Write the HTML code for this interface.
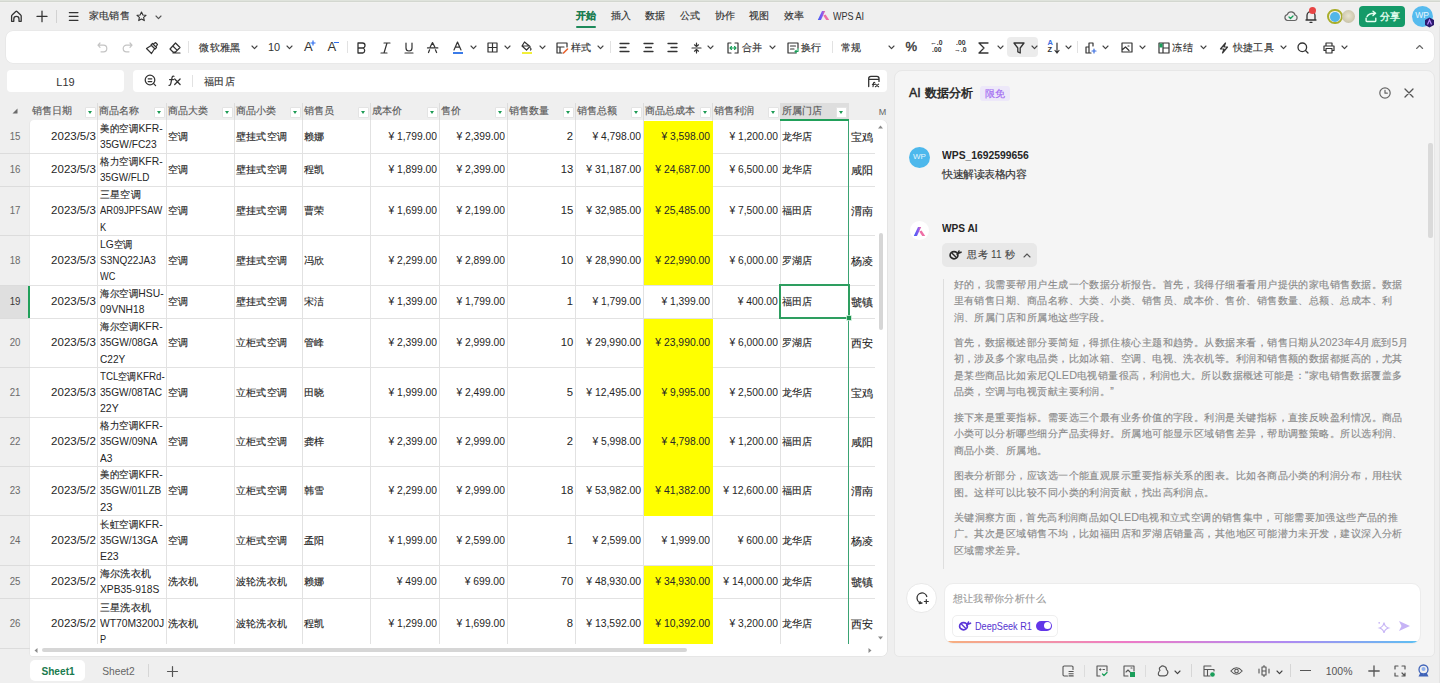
<!DOCTYPE html><html><head><meta charset="utf-8"><style>
*{margin:0;padding:0;box-sizing:border-box}
html,body{width:1440px;height:683px;overflow:hidden;background:#efefef;font-family:"Liberation Sans",sans-serif;color:#262626;position:relative}
.a{position:absolute}
.tl{position:absolute;white-space:nowrap}
.k{font-size:var(--c);letter-spacing:var(--d);-webkit-text-stroke:var(--s,0.15px) currentColor}
svg{position:absolute;overflow:visible}
</style></head><body><div class="a" style="left:0;top:0;width:1440px;height:3px;background:linear-gradient(#dfe3dc 0,#dfe3dc 1px,#d3d7d0 1px,#d3d7d0 2px,#f2f2f0 2px)"></div>
<svg style="left:10px;top:10px;" width="13" height="13" viewBox="0 0 13 13" fill="none" stroke="#333333" stroke-width="1.2" stroke-linecap="round" stroke-linejoin="round"><path d="M1.6 11.3 V5.9 Q1.6 5.3 2.1 4.9 L5.8 1.5 Q6.4 1 7 1.5 L10.7 4.9 Q11.2 5.3 11.2 5.9 V11.3 H9 V8.9 A2.6 2.6 0 0 0 3.8 8.9 V11.3 Z" stroke-width="1.3"/></svg>
<svg style="left:36px;top:10px;" width="12" height="12" viewBox="0 0 12 12" fill="none" stroke="#333333" stroke-width="1.2" stroke-linecap="round" stroke-linejoin="round"><path d="M6 1.1 V11.7 M1 6.4 H11" stroke-width="1.25"/></svg>
<div class="a" style="left:56px;top:10px;width:1px;height:13px;background:#d2d2d2"></div>
<svg style="left:69px;top:12px;" width="10" height="10" viewBox="0 0 10 10" fill="none" stroke="#333333" stroke-width="1.2" stroke-linecap="round" stroke-linejoin="round"><path d="M0.3 0.6 H9 M0.3 4.4 H9 M0.3 8.3 H9" stroke-width="1.15"/></svg>
<div class="tl" style="top:7.30px;line-height:16px;font-size:11.0px;color:#333;left:89.00px;transform-origin:left center;--c:10.2px;--d:0.200px;"><span class="k">家电销售</span></div>
<svg style="left:136px;top:11px;" width="11" height="11" viewBox="0 0 11 11" fill="none" stroke="#333333" stroke-width="1.2" stroke-linecap="round" stroke-linejoin="round"><path d="M5.5 1 L6.9 4 L10 4.3 L7.6 6.4 L8.3 9.6 L5.5 8 L2.7 9.6 L3.4 6.4 L1 4.3 L4.1 4 Z" stroke-width="1.1"/></svg>
<svg style="left:155px;top:15px" width="7" height="4.6" viewBox="-1 -1 7 4.6" fill="none" stroke="#555" stroke-width="1.15" stroke-linecap="round" stroke-linejoin="round"><path d="M0 0 L2.5 2.6 L5 0"/></svg>
<div class="tl" style="top:7.30px;line-height:16px;font-size:11.0px;color:#1c7c52;font-weight:bold;left:576.00px;transform-origin:left center;--c:10.3px;--d:0.300px;"><span class="k">开始</span></div>
<div class="tl" style="top:7.30px;line-height:16px;font-size:11.0px;color:#333;left:610.70px;transform-origin:left center;--c:10.3px;--d:0.300px;"><span class="k">插入</span></div>
<div class="tl" style="top:7.30px;line-height:16px;font-size:11.0px;color:#333;left:645.00px;transform-origin:left center;--c:10.3px;--d:0.300px;"><span class="k">数据</span></div>
<div class="tl" style="top:7.30px;line-height:16px;font-size:11.0px;color:#333;left:680.00px;transform-origin:left center;--c:10.3px;--d:0.300px;"><span class="k">公式</span></div>
<div class="tl" style="top:7.30px;line-height:16px;font-size:11.0px;color:#333;left:714.50px;transform-origin:left center;--c:10.3px;--d:0.300px;"><span class="k">协作</span></div>
<div class="tl" style="top:7.30px;line-height:16px;font-size:11.0px;color:#333;left:749.00px;transform-origin:left center;--c:10.3px;--d:0.300px;"><span class="k">视图</span></div>
<div class="tl" style="top:7.30px;line-height:16px;font-size:11.0px;color:#333;left:783.50px;transform-origin:left center;--c:10.3px;--d:0.300px;"><span class="k">效率</span></div>
<div class="a" style="left:576px;top:25.5px;width:20px;height:2px;background:#1d8a5b;border-radius:1px"></div>
<svg style="left:817px;top:10px" width="13" height="11" viewBox="0 0 13 11"><defs><linearGradient id="wg" x1="0" y1="0" x2="1" y2="0"><stop offset="0" stop-color="#3b5cf5"/><stop offset="0.6" stop-color="#8a5cf0"/><stop offset="1" stop-color="#f06a9a"/></linearGradient></defs><path d="M0.8 10 L5 1 L8.2 1 L4 10 Z" fill="url(#wg)"/><path d="M6.3 5.6 L8.6 4.6 L12.2 10 L9.2 10 Z" fill="#ee6fa6"/></svg>
<div class="tl" style="top:7.60px;line-height:16px;font-size:10.5px;color:#333;left:833.00px;transform-origin:left center;transform:scaleX(0.860);--c:10.2px;--d:0.200px;">WPS AI</div>
<svg style="left:1284px;top:10px;" width="14" height="12" viewBox="0 0 14 12" fill="none" stroke="#333333" stroke-width="1.2" stroke-linecap="round" stroke-linejoin="round"><path d="M3.5 10.5 H10.5 A2.8 2.8 0 0 0 11 5 A4 4 0 0 0 3.3 4.6 A3 3 0 0 0 3.5 10.5 Z" stroke="#666"/><path d="M5 7 L6.5 8.5 L9 6" stroke="#1a9e5a" stroke-width="1.3"/></svg>
<svg style="left:1305px;top:9px;" width="12" height="15" viewBox="0 0 12 15" fill="none" stroke="#333333" stroke-width="1.2" stroke-linecap="round" stroke-linejoin="round"><path d="M2 11 V6.5 A4 4 0 0 1 10 6.5 V11 H11 M1 11 H11 M5 13.3 H7" stroke="#333" stroke-width="1.3"/></svg>
<div class="a" style="left:1309px;top:6.5px;width:7px;height:7px;border-radius:50%;background:#e84545"></div>
<div class="a" style="left:1327px;top:8.8px;width:15.5px;height:15.5px;border-radius:50%;border:2px solid #a9ae2c;background:#efefef"></div>
<div class="a" style="left:1330px;top:11.5px;width:10px;height:10px;border-radius:50%;background:#52b6e8"></div>
<div class="a" style="left:1341.5px;top:9.8px;width:13px;height:13px;border-radius:50%;background:radial-gradient(circle at 50% 45%,#e8e4d0 0,#cfc9b0 60%,#b9b9a6 100%)"></div>
<div class="a" style="left:1359px;top:6px;width:46px;height:21px;border-radius:4px;background:#149a68"></div>
<svg style="left:1364px;top:10px;" width="14" height="13" viewBox="0 0 14 13" fill="none" stroke="#333333" stroke-width="1.2" stroke-linecap="round" stroke-linejoin="round"><path d="M2.1 8.2 V10.8 Q2.1 11.5 2.8 11.5 H11.1 Q11.8 11.5 11.8 10.8 V8.2 M3 6.6 Q4.8 3.2 10.6 3.3 M9 1.2 L11.6 3.3 L9 5.5" stroke="#e6fff1" stroke-width="1.35"/></svg>
<div class="tl" style="top:8.10px;line-height:16px;font-size:11.0px;color:#e6fff1;left:1379.50px;transform-origin:left center;--c:10.3px;--d:0.300px;--s:0.35px;"><span class="k">分享</span></div>
<div class="a" style="left:1411.5px;top:5.5px;width:21px;height:21px;border-radius:50%;background:#56bbee"></div>
<div class="tl" style="top:7.30px;line-height:16px;font-size:8.5px;color:#e9f6fd;left:1415.15px;transform-origin:center center;--c:10.2px;--d:0.200px;">WP</div>
<svg style="left:1424px;top:17px" width="11" height="11" viewBox="0 0 11 11"><path d="M5.5 0.5 L10 3 V8 L5.5 10.5 L1 8 V3 Z" fill="#2c1b6e"/><path d="M3.5 7.5 L5.5 3 L7.5 7.5" stroke="#b98cff" stroke-width="1.2" fill="none"/></svg>
<div class="a" style="left:6px;top:31px;width:1428px;height:32px;background:#fff;border-radius:7px;box-shadow:0 0 0 0.6px #e3e3e3"></div>
<svg style="left:97px;top:42px;" width="11" height="11" viewBox="0 0 11 11" fill="none" stroke="#333333" stroke-width="1.2" stroke-linecap="round" stroke-linejoin="round"><path d="M3 1 L1 3.2 L3 5.4 M1 3.2 H6.5 A3.3 3.3 0 0 1 6.5 9.8 H4" stroke="#c4c4c4"/></svg>
<svg style="left:121.5px;top:42px;" width="11" height="11" viewBox="0 0 11 11" fill="none" stroke="#333333" stroke-width="1.2" stroke-linecap="round" stroke-linejoin="round"><path d="M8 1 L10 3.2 L8 5.4 M10 3.2 H4.5 A3.3 3.3 0 0 0 4.5 9.8 H7" stroke="#c4c4c4"/></svg>
<svg style="left:144.5px;top:41.5px;" width="13" height="13" viewBox="0 0 13 13" fill="none" stroke="#333333" stroke-width="1.2" stroke-linecap="round" stroke-linejoin="round"><path d="M7.5 1.5 L11.5 5.5 L10 7 L6 3 Z M6.2 3.5 L1.5 6.5 L6.5 11.5 L9.5 6.8 M9 1.5 L10.5 0.5 L12.5 2.5 L11.5 4" stroke-width="1.2"/></svg>
<svg style="left:169px;top:42px;" width="12" height="12" viewBox="0 0 12 12" fill="none" stroke="#333333" stroke-width="1.2" stroke-linecap="round" stroke-linejoin="round"><path d="M6.5 1 L11 5.5 L6.5 10 H4 L1 7 Z M3.8 4 L8 8.2 M4 11 H11" stroke-width="1.2"/></svg>
<div class="a" style="left:188px;top:41px;width:1px;height:12px;background:#e2e2e2"></div>
<div class="tl" style="top:39.30px;line-height:16px;font-size:11.0px;color:#333;left:199.20px;transform-origin:left center;--c:10.4px;--d:0.400px;"><span class="k">微软雅黑</span></div>
<svg style="left:250.5px;top:45.2px" width="7" height="4.6" viewBox="-1 -1 7 4.6" fill="none" stroke="#444" stroke-width="1.15" stroke-linecap="round" stroke-linejoin="round"><path d="M0 0 L2.5 2.6 L5 0"/></svg>
<div class="tl" style="top:38.80px;line-height:16px;font-size:11.5px;color:#333;left:268.30px;transform-origin:left center;transform:scaleX(0.950);--c:10.2px;--d:0.200px;">10</div>
<svg style="left:285.5px;top:45.2px" width="7" height="4.6" viewBox="-1 -1 7 4.6" fill="none" stroke="#444" stroke-width="1.15" stroke-linecap="round" stroke-linejoin="round"><path d="M0 0 L2.5 2.6 L5 0"/></svg>
<div class="tl" style="top:38.80px;line-height:16px;font-size:13px;color:#333;left:304.00px;transform-origin:left center;--c:10.2px;--d:0.200px;">A</div>
<svg style="left:310px;top:40px" width="6" height="6"><path d="M3 0.5 V5.5 M0.5 3 H5.5" stroke="#2f6ef0" stroke-width="1.2"/></svg>
<div class="tl" style="top:38.80px;line-height:16px;font-size:13px;color:#333;left:327.50px;transform-origin:left center;--c:10.2px;--d:0.200px;">A</div>
<div class="a" style="left:334px;top:42px;width:5px;height:1.2px;background:#2f6ef0"></div>
<div class="a" style="left:346.5px;top:41px;width:1px;height:12px;background:#e2e2e2"></div>
<svg style="left:355.5px;top:41.5px;" width="11" height="12" viewBox="0 0 11 12" fill="none" stroke="#333333" stroke-width="1.2" stroke-linecap="round" stroke-linejoin="round"><path d="M2 1 H6.5 A2.5 2.5 0 0 1 6.5 6 H2 Z M2 6 H7 A2.7 2.7 0 0 1 7 11 H2 Z" stroke-width="1.3"/></svg>
<svg style="left:379.5px;top:41.5px;" width="11" height="12" viewBox="0 0 11 12" fill="none" stroke="#333333" stroke-width="1.2" stroke-linecap="round" stroke-linejoin="round"><path d="M4 1 H10 M1 11 H7 M7 1 L4 11" stroke-width="1.2"/></svg>
<svg style="left:403.5px;top:41.5px;" width="10" height="12" viewBox="0 0 10 12" fill="none" stroke="#333333" stroke-width="1.2" stroke-linecap="round" stroke-linejoin="round"><path d="M2 1 V6 A3 3 0 0 0 8 6 V1 M1 11 H9" stroke-width="1.2"/></svg>
<svg style="left:427px;top:41.5px;" width="12" height="12" viewBox="0 0 12 12" fill="none" stroke="#333333" stroke-width="1.2" stroke-linecap="round" stroke-linejoin="round"><path d="M3.3 4.7 L5.5 0.6 L7.7 4.7 M0.5 5.9 H10.8 M2.6 7.8 L1.5 10.5 M8.4 7.8 L9.6 10.5" stroke-width="1.25"/></svg>
<svg style="left:452px;top:41px;" width="11" height="12" viewBox="0 0 11 12" fill="none" stroke="#333333" stroke-width="1.2" stroke-linecap="round" stroke-linejoin="round"><path d="M2 9 L5.5 1 L9 9 M3.3 6.2 H7.7" stroke-width="1.2"/></svg>
<div class="a" style="left:453px;top:52px;width:10px;height:2px;background:#3b7be8"></div>
<svg style="left:470px;top:45.2px" width="7" height="4.6" viewBox="-1 -1 7 4.6" fill="none" stroke="#444" stroke-width="1.15" stroke-linecap="round" stroke-linejoin="round"><path d="M0 0 L2.5 2.6 L5 0"/></svg>
<svg style="left:486.5px;top:42px;" width="11" height="11" viewBox="0 0 11 11" fill="none" stroke="#333333" stroke-width="1.2" stroke-linecap="round" stroke-linejoin="round"><path d="M1 1 H10 V10 H1 Z M5.5 1 V10 M1 5.5 H10" stroke-width="1.2"/></svg>
<svg style="left:504px;top:45.2px" width="7" height="4.6" viewBox="-1 -1 7 4.6" fill="none" stroke="#444" stroke-width="1.15" stroke-linecap="round" stroke-linejoin="round"><path d="M0 0 L2.5 2.6 L5 0"/></svg>
<svg style="left:521px;top:41px;" width="11" height="11" viewBox="0 0 11 11" fill="none" stroke="#333333" stroke-width="1.2" stroke-linecap="round" stroke-linejoin="round"><path d="M3.5 1 L9 5.5 L5.5 9 L1 5 Z M1.5 5 H8.7 M9.5 7 Q10.5 8.5 9.5 9" stroke-width="1.2"/></svg>
<div class="a" style="left:521.5px;top:52px;width:10px;height:2px;background:#f2ef3a"></div>
<svg style="left:539px;top:45.2px" width="7" height="4.6" viewBox="-1 -1 7 4.6" fill="none" stroke="#444" stroke-width="1.15" stroke-linecap="round" stroke-linejoin="round"><path d="M0 0 L2.5 2.6 L5 0"/></svg>
<svg style="left:555.5px;top:41.5px;" width="13" height="12" viewBox="0 0 13 12" fill="none" stroke="#333333" stroke-width="1.2" stroke-linecap="round" stroke-linejoin="round"><path d="M1 1 H11 V5 M1 1 V11 H6 M1 5 H8 M4 5 V11" stroke-width="1.2"/><path d="M7.5 11 L11.5 7" stroke="#e8612c" stroke-width="1.6"/></svg>
<div class="tl" style="top:39.30px;line-height:16px;font-size:11.0px;color:#333;left:570.80px;transform-origin:left center;--c:10.4px;--d:0.400px;"><span class="k">样式</span></div>
<svg style="left:596.5px;top:45.2px" width="7" height="4.6" viewBox="-1 -1 7 4.6" fill="none" stroke="#444" stroke-width="1.15" stroke-linecap="round" stroke-linejoin="round"><path d="M0 0 L2.5 2.6 L5 0"/></svg>
<div class="a" style="left:610px;top:41px;width:1px;height:12px;background:#e2e2e2"></div>
<svg style="left:618.5px;top:42px;" width="11" height="11" viewBox="0 0 11 11" fill="none" stroke="#333333" stroke-width="1.2" stroke-linecap="round" stroke-linejoin="round"><path d="M1 1.5 H10 M1 5.5 H7 M1 9.5 H10" stroke-width="1.3"/></svg>
<svg style="left:643px;top:42px;" width="11" height="11" viewBox="0 0 11 11" fill="none" stroke="#333333" stroke-width="1.2" stroke-linecap="round" stroke-linejoin="round"><path d="M1 1.5 H10 M2.5 5.5 H8.5 M1 9.5 H10" stroke-width="1.3"/></svg>
<svg style="left:666.5px;top:42px;" width="11" height="11" viewBox="0 0 11 11" fill="none" stroke="#333333" stroke-width="1.2" stroke-linecap="round" stroke-linejoin="round"><path d="M1 1.5 H10 M4 5.5 H10 M1 9.5 H10" stroke-width="1.3"/></svg>
<svg style="left:690.5px;top:41.5px;" width="11" height="12" viewBox="0 0 11 12" fill="none" stroke="#333333" stroke-width="1.2" stroke-linecap="round" stroke-linejoin="round"><path d="M1 6 H10 M5.5 1 V4.5 M3.5 2.8 L5.5 4.5 L7.5 2.8 M5.5 11 V7.5 M3.5 9.2 L5.5 7.5 L7.5 9.2" stroke-width="1.2"/></svg>
<svg style="left:706.5px;top:45.2px" width="7" height="4.6" viewBox="-1 -1 7 4.6" fill="none" stroke="#444" stroke-width="1.15" stroke-linecap="round" stroke-linejoin="round"><path d="M0 0 L2.5 2.6 L5 0"/></svg>
<svg style="left:727px;top:41.5px;" width="12" height="12" viewBox="0 0 12 12" fill="none" stroke="#333333" stroke-width="1.2" stroke-linecap="round" stroke-linejoin="round"><path d="M4 1 H1 V11 H4 M8 1 H11 V11 H8" stroke-width="1.2"/><path d="M3 6 H9 M4.5 4.5 L3 6 L4.5 7.5 M7.5 4.5 L9 6 L7.5 7.5" stroke="#1a9e5a" stroke-width="1.1"/></svg>
<div class="tl" style="top:39.30px;line-height:16px;font-size:11.0px;color:#333;left:741.70px;transform-origin:left center;--c:10.4px;--d:0.400px;"><span class="k">合并</span></div>
<svg style="left:769px;top:45.2px" width="7" height="4.6" viewBox="-1 -1 7 4.6" fill="none" stroke="#444" stroke-width="1.15" stroke-linecap="round" stroke-linejoin="round"><path d="M0 0 L2.5 2.6 L5 0"/></svg>
<svg style="left:786.5px;top:41.5px;" width="12" height="12" viewBox="0 0 12 12" fill="none" stroke="#333333" stroke-width="1.2" stroke-linecap="round" stroke-linejoin="round"><path d="M9 11 H1 V1 H11 V6 M3.5 4 H8.5 M3.5 7 H7" stroke-width="1.2"/><path d="M11 6.5 V9.5 H8 M9.3 8.3 L8 9.5 L9.3 10.7" stroke="#1a9e5a" stroke-width="1.1"/></svg>
<div class="tl" style="top:39.30px;line-height:16px;font-size:11.0px;color:#333;left:800.80px;transform-origin:left center;--c:10.4px;--d:0.400px;"><span class="k">换行</span></div>
<div class="a" style="left:831.5px;top:41px;width:1px;height:12px;background:#e2e2e2"></div>
<div class="tl" style="top:39.30px;line-height:16px;font-size:11.0px;color:#333;left:840.80px;transform-origin:left center;--c:10.4px;--d:0.400px;"><span class="k">常规</span></div>
<svg style="left:887.5px;top:45.2px" width="7" height="4.6" viewBox="-1 -1 7 4.6" fill="none" stroke="#444" stroke-width="1.15" stroke-linecap="round" stroke-linejoin="round"><path d="M0 0 L2.5 2.6 L5 0"/></svg>
<div class="tl" style="top:38.80px;line-height:16px;font-size:13px;color:#333;left:905.50px;transform-origin:left center;--c:10.2px;--d:0.200px;-webkit-text-stroke:0.4px #333;">%</div>
<div class="tl" style="top:35.30px;line-height:16px;font-size:7.5px;color:#333;font-weight:bold;left:929.50px;transform-origin:left center;transform:scaleX(0.900);--c:10.2px;--d:0.200px;">←.0</div>
<div class="tl" style="top:42.30px;line-height:16px;font-size:7.5px;color:#333;font-weight:bold;left:931.50px;transform-origin:left center;transform:scaleX(0.900);--c:10.2px;--d:0.200px;">.00</div>
<div class="tl" style="top:35.30px;line-height:16px;font-size:7.5px;color:#333;font-weight:bold;left:955.50px;transform-origin:left center;transform:scaleX(0.900);--c:10.2px;--d:0.200px;">.00</div>
<div class="tl" style="top:42.30px;line-height:16px;font-size:7.5px;color:#333;font-weight:bold;left:953.50px;transform-origin:left center;transform:scaleX(0.900);--c:10.2px;--d:0.200px;">→.0</div>
<svg style="left:978px;top:41.5px;" width="11" height="12" viewBox="0 0 11 12" fill="none" stroke="#333333" stroke-width="1.2" stroke-linecap="round" stroke-linejoin="round"><path d="M10 1 H1 L6 6 L1 11 H10" stroke-width="1.3"/></svg>
<svg style="left:996.5px;top:45.2px" width="7" height="4.6" viewBox="-1 -1 7 4.6" fill="none" stroke="#444" stroke-width="1.15" stroke-linecap="round" stroke-linejoin="round"><path d="M0 0 L2.5 2.6 L5 0"/></svg>
<div class="a" style="left:1007px;top:37px;width:31px;height:20px;background:#ececec;border-radius:4px"></div>
<svg style="left:1012.5px;top:41.5px;" width="12" height="12" viewBox="0 0 12 12" fill="none" stroke="#333333" stroke-width="1.2" stroke-linecap="round" stroke-linejoin="round"><path d="M1 1 H11 L7.2 6 V11 L4.8 9.8 V6 Z" stroke-width="1.3"/></svg>
<svg style="left:1030.5px;top:45.2px" width="7" height="4.6" viewBox="-1 -1 7 4.6" fill="none" stroke="#444" stroke-width="1.15" stroke-linecap="round" stroke-linejoin="round"><path d="M0 0 L2.5 2.6 L5 0"/></svg>
<div class="tl" style="top:35.30px;line-height:16px;font-size:7.5px;color:#3b6fe0;font-weight:bold;left:1047.50px;transform-origin:left center;--c:10.2px;--d:0.200px;">A</div>
<div class="tl" style="top:42.30px;line-height:16px;font-size:7.5px;color:#333;font-weight:bold;left:1047.50px;transform-origin:left center;--c:10.2px;--d:0.200px;">Z</div>
<svg style="left:1054px;top:41.5px;" width="6" height="12" viewBox="0 0 6 12" fill="none" stroke="#333333" stroke-width="1.2" stroke-linecap="round" stroke-linejoin="round"><path d="M3 1 V11 M1 8.5 L3 11 L5 8.5" stroke-width="1.2"/></svg>
<svg style="left:1065px;top:45.2px" width="7" height="4.6" viewBox="-1 -1 7 4.6" fill="none" stroke="#444" stroke-width="1.15" stroke-linecap="round" stroke-linejoin="round"><path d="M0 0 L2.5 2.6 L5 0"/></svg>
<div class="a" style="left:1076.5px;top:41px;width:1px;height:12px;background:#e2e2e2"></div>
<svg style="left:1084.5px;top:41.5px;" width="12" height="12" viewBox="0 0 12 12" fill="none" stroke="#333333" stroke-width="1.2" stroke-linecap="round" stroke-linejoin="round"><path d="M1 11 V5 H4 V1 H8 V4 M4 11 V5 M1 11 H6" stroke-width="1.2"/><path d="M9 7 V11 M7 9 H11" stroke="#3b6fe0" stroke-width="1.2"/></svg>
<svg style="left:1101.5px;top:45.2px" width="7" height="4.6" viewBox="-1 -1 7 4.6" fill="none" stroke="#444" stroke-width="1.15" stroke-linecap="round" stroke-linejoin="round"><path d="M0 0 L2.5 2.6 L5 0"/></svg>
<svg style="left:1120.5px;top:42px;" width="12" height="11" viewBox="0 0 12 11" fill="none" stroke="#333333" stroke-width="1.2" stroke-linecap="round" stroke-linejoin="round"><path d="M1 1 H11 V10 H1 Z M1 8 L4.5 5 L8 8.5 M7 4 H8" stroke-width="1.2"/></svg>
<svg style="left:1138.5px;top:45.2px" width="7" height="4.6" viewBox="-1 -1 7 4.6" fill="none" stroke="#444" stroke-width="1.15" stroke-linecap="round" stroke-linejoin="round"><path d="M0 0 L2.5 2.6 L5 0"/></svg>
<svg style="left:1157.5px;top:41.5px;" width="12" height="12" viewBox="0 0 12 12" fill="none" stroke="#333333" stroke-width="1.2" stroke-linecap="round" stroke-linejoin="round"><path d="M1 1 H11 V11 H1 Z M5 1 V11 M5 6 H11" stroke-width="1.2"/><path d="M1.5 1.5 H4.5 V5.5 H1.5 Z" fill="#1a9e5a" stroke="none"/></svg>
<div class="tl" style="top:39.30px;line-height:16px;font-size:11.0px;color:#333;left:1172.30px;transform-origin:left center;--c:10.4px;--d:0.400px;"><span class="k">冻结</span></div>
<svg style="left:1199.5px;top:45.2px" width="7" height="4.6" viewBox="-1 -1 7 4.6" fill="none" stroke="#444" stroke-width="1.15" stroke-linecap="round" stroke-linejoin="round"><path d="M0 0 L2.5 2.6 L5 0"/></svg>
<svg style="left:1218.5px;top:41.5px;" width="10" height="12" viewBox="0 0 10 12" fill="none" stroke="#333333" stroke-width="1.2" stroke-linecap="round" stroke-linejoin="round"><path d="M6.5 1 L1.5 7 H5 L3.5 11 L8.5 5 H5 Z" stroke-width="1.2"/></svg>
<div class="tl" style="top:39.30px;line-height:16px;font-size:11.0px;color:#333;left:1232.70px;transform-origin:left center;--c:10.4px;--d:0.400px;"><span class="k">快捷工具</span></div>
<svg style="left:1279.5px;top:45.2px" width="7" height="4.6" viewBox="-1 -1 7 4.6" fill="none" stroke="#444" stroke-width="1.15" stroke-linecap="round" stroke-linejoin="round"><path d="M0 0 L2.5 2.6 L5 0"/></svg>
<svg style="left:1297px;top:41.5px;" width="12" height="12" viewBox="0 0 12 12" fill="none" stroke="#333333" stroke-width="1.2" stroke-linecap="round" stroke-linejoin="round"><circle cx="5.3" cy="5.3" r="4.3" stroke-width="1.3"/><path d="M8.5 8.5 L11 11" stroke-width="1.3"/></svg>
<svg style="left:1322.5px;top:41.5px;" width="12" height="12" viewBox="0 0 12 12" fill="none" stroke="#333333" stroke-width="1.2" stroke-linecap="round" stroke-linejoin="round"><path d="M3 4 V1 H9 V4 M3 8.5 H1 V4 H11 V8.5 H9 M3 6.5 H9 V11 H3 Z" stroke-width="1.2"/></svg>
<svg style="left:1341px;top:45.2px" width="7" height="4.6" viewBox="-1 -1 7 4.6" fill="none" stroke="#444" stroke-width="1.15" stroke-linecap="round" stroke-linejoin="round"><path d="M0 0 L2.5 2.6 L5 0"/></svg>
<svg style="left:1414.5px;top:44px" width="10" height="6" viewBox="0 0 10 6" fill="none" stroke="#6a6a6a" stroke-width="1.15" stroke-linecap="round" stroke-linejoin="round"><path d="M1.6 4.5 L4.6 1.5 L7.6 4.5"/></svg>
<div class="a" style="left:7px;top:70px;width:117px;height:22px;background:#fff;border-radius:4px"></div>
<div class="tl" style="top:74.30px;line-height:16px;font-size:11px;color:#333;left:56.32px;transform-origin:center center;--c:10.2px;--d:0.200px;">L19</div>
<div class="a" style="left:133px;top:70px;width:754px;height:22px;background:#fff;border-radius:4px"></div>
<svg style="left:143px;top:73px;" width="16" height="16" viewBox="0 0 16 16" fill="none" stroke="#333333" stroke-width="1.2" stroke-linecap="round" stroke-linejoin="round"><circle cx="7" cy="7" r="4.8" stroke-width="1.25"/><path d="M10.4 10.4 L12.6 12.6 M5.2 5.75 H8.8 M5.2 8.5 H8.8" stroke-width="1.25"/></svg>
<svg style="left:167px;top:73px;" width="16" height="16" viewBox="0 0 16 16" fill="none" stroke="#333333" stroke-width="1.2" stroke-linecap="round" stroke-linejoin="round"><path d="M6.9 3.3 Q5.6 2.5 5.1 4.4 L3.8 10.6 Q3.3 12.6 2 12.3 M2.6 6.6 H6.5 M7.7 6 L13.1 11.5 M13.1 6 L7.7 11.5" stroke-width="1.25"/></svg>
<div class="a" style="left:192px;top:75px;width:1px;height:12px;background:#e2e2e2"></div>
<div class="tl" style="top:73.30px;line-height:16px;font-size:11.0px;color:#333;left:204.00px;transform-origin:left center;--c:10.3px;--d:0.300px;"><span class="k">福田店</span></div>
<svg style="left:866px;top:74px;" width="16" height="16" viewBox="0 0 16 16" fill="none" stroke="#333333" stroke-width="1.2" stroke-linecap="round" stroke-linejoin="round"><path d="M2.7 12.6 V4.5 Q2.7 2.3 4.9 2.3 H10.9 Q13 2.3 13 4.5 V7.4 M2.7 5.4 H13" stroke-width="1.3"/><path d="M8.7 8.5 Q7.7 8.2 7.5 9.4 L7 12.7 M6.4 10.3 H8.5 M9.4 10.1 L12.6 12.7 M12.6 10.1 L9.4 12.7" stroke-width="1.15"/></svg>
<div class="a" style="left:29.5px;top:659.7px;width:55.5px;height:21.6px;background:#fff;border-radius:5px"></div>
<div class="tl" style="top:663.30px;line-height:16px;font-size:11px;color:#1a7a4e;font-weight:bold;left:39.76px;transform-origin:center center;transform:scaleX(0.920);--c:10.2px;--d:0.200px;">Sheet1</div>
<div class="tl" style="top:663.30px;line-height:16px;font-size:11px;color:#666;left:101.17px;transform-origin:center center;transform:scaleX(0.930);--c:10.2px;--d:0.200px;">Sheet2</div>
<div class="a" style="left:148px;top:664px;width:1px;height:13px;background:#d6d6d6"></div>
<svg style="left:166.5px;top:665.5px;" width="11" height="11" viewBox="0 0 11 11" fill="none" stroke="#333333" stroke-width="1.2" stroke-linecap="round" stroke-linejoin="round"><path d="M5.5 0.5 V10.5 M0.5 5.5 H10.5" stroke="#555" stroke-width="1.2"/></svg>
<svg style="left:1062px;top:665px;" width="12" height="12" viewBox="0 0 12 12" fill="none" stroke="#333333" stroke-width="1.2" stroke-linecap="round" stroke-linejoin="round"><path d="M11 4.5 V2.2 Q11 1 9.8 1 H2.2 Q1 1 1 2.2 V9.8 Q1 11 2.2 11 H5.5 M7 6.5 H11.2 M7 8.7 H11.2 M7 10.9 H11.2" stroke="#555" stroke-width="1.1"/></svg>
<div class="a" style="left:1084px;top:665px;width:1px;height:12px;background:#dcdcdc"></div>
<svg style="left:1096px;top:665px;" width="12" height="12" viewBox="0 0 12 12" fill="none" stroke="#333333" stroke-width="1.2" stroke-linecap="round" stroke-linejoin="round"><path d="M4 11 H1 V1 H11 V6 M3.5 4.5 H5 M7 4.5 H8.5 M4.3 3.8 V5.2" stroke="#555" stroke-width="1.1"/><path d="M6.5 9 L8 10.5 L11 7.5" stroke="#1a9e5a" stroke-width="1.3"/></svg>
<svg style="left:1123px;top:665px;" width="12" height="12" viewBox="0 0 12 12" fill="none" stroke="#333333" stroke-width="1.2" stroke-linecap="round" stroke-linejoin="round"><path d="M5 11 H1 V1 H11 V6 M3 7 L5 5 L7 7 M8 3 H9" stroke="#555" stroke-width="1.1"/><rect x="7" y="7" width="5" height="5" fill="#1a9e5a" stroke="none"/></svg>
<div class="a" style="left:1145px;top:665px;width:1px;height:12px;background:#dcdcdc"></div>
<svg style="left:1156.5px;top:665px;" width="12" height="12" viewBox="0 0 12 12" fill="none" stroke="#333333" stroke-width="1.2" stroke-linecap="round" stroke-linejoin="round"><path d="M3 5.3 Q1.4 3.2 3.6 1.9 Q5.4 0.1 7.4 1.5 Q9.6 2.2 9.4 4.6 Q11.6 6.2 10.6 8.6 Q9.9 10.9 7.4 10.8 H3.6 Q0.9 10.8 1.4 8.1 Q1.8 6.4 3 5.3 Z" stroke="#555" stroke-width="1.15"/></svg>
<svg style="left:1174px;top:669.5px" width="7" height="4.6" viewBox="-1 -1 7 4.6" fill="none" stroke="#444" stroke-width="1.15" stroke-linecap="round" stroke-linejoin="round"><path d="M0 0 L2.5 2.6 L5 0"/></svg>
<div class="a" style="left:1191px;top:664px;width:1px;height:13px;background:#d6d6d6"></div>
<svg style="left:1203px;top:665px;" width="12" height="12" viewBox="0 0 12 12" fill="none" stroke="#333333" stroke-width="1.2" stroke-linecap="round" stroke-linejoin="round"><path d="M8 1 H1 V11 H7 M1 4.5 H11 V6 M4.5 4.5 V11" stroke="#555" stroke-width="1.1"/><circle cx="9.5" cy="9.5" r="2.3" fill="#1a9e5a" stroke="none"/></svg>
<svg style="left:1229.5px;top:666px;" width="13" height="10" viewBox="0 0 13 10" fill="none" stroke="#333333" stroke-width="1.2" stroke-linecap="round" stroke-linejoin="round"><path d="M0.8 5 Q6.5 -1.5 12.2 5 Q6.5 11.5 0.8 5 Z" stroke="#555" stroke-width="1.1"/><circle cx="6.5" cy="5" r="1.8" stroke="#555" stroke-width="1.1"/></svg>
<svg style="left:1257.5px;top:665px;" width="12" height="12" viewBox="0 0 12 12" fill="none" stroke="#333333" stroke-width="1.2" stroke-linecap="round" stroke-linejoin="round"><path d="M4 2 H8 V10 H4 Z M6 0.5 V2 M6 10 V11.5 M1 4 V8 M11 4 V8 M4 6 H8" stroke="#555" stroke-width="1.1"/></svg>
<svg style="left:1276px;top:669.5px" width="7" height="4.6" viewBox="-1 -1 7 4.6" fill="none" stroke="#444" stroke-width="1.15" stroke-linecap="round" stroke-linejoin="round"><path d="M0 0 L2.5 2.6 L5 0"/></svg>
<div class="a" style="left:1289.5px;top:664px;width:1px;height:13px;background:#d6d6d6"></div>
<div class="a" style="left:1300px;top:670px;width:11px;height:1.3px;background:#555"></div>
<div class="tl" style="top:663.30px;line-height:16px;font-size:11px;color:#555;left:1325.43px;transform-origin:center center;transform:scaleX(0.950);--c:10.2px;--d:0.200px;">100%</div>
<svg style="left:1367.5px;top:665px;" width="12" height="12" viewBox="0 0 12 12" fill="none" stroke="#333333" stroke-width="1.2" stroke-linecap="round" stroke-linejoin="round"><path d="M6 0.8 V11.2 M0.8 6 H11.2" stroke="#555" stroke-width="1.3"/></svg>
<svg style="left:1394px;top:665px;" width="12" height="12" viewBox="0 0 12 12" fill="none" stroke="#333333" stroke-width="1.2" stroke-linecap="round" stroke-linejoin="round"><path d="M1 4 V1 H4 M8 1 H11 V4 M11 8 V11 H8 M4 11 H1 V8 M8 8 L10.5 10.5" stroke="#555" stroke-width="1.2"/></svg>
<svg style="left:1417px;top:664px" width="13" height="13" viewBox="0 0 13 13"><circle cx="6.5" cy="5.5" r="4.5" fill="none" stroke="#3f63b8" stroke-width="1.3"/><path d="M1.5 12.5 L3.5 8.5 L6.5 10.5 L9.5 8.5 L11.5 12.5 Z" fill="#3f63b8"/><circle cx="6.5" cy="5" r="2" fill="#8fb0ee"/></svg>
<div class="a" style="left:894px;top:70px;width:540.5px;height:586.5px;background:#f5f5f5;border-radius:8px 8px 5px 5px;border:1px solid #e7e7e7"></div>
<div class="a" style="left:1439px;top:26px;width:1px;height:657px;background:#e4e4e4"></div>
<div class="tl" style="top:84.80px;line-height:16px;font-size:13px;color:#262626;left:909.00px;transform-origin:left center;transform:scaleX(0.950);--c:10.2px;--d:0.200px;-webkit-text-stroke:0.45px #262626;">AI </div>
<div class="tl" style="top:84.80px;line-height:16px;font-size:11.0px;color:#262626;left:924.50px;transform-origin:left center;--c:12.2px;--d:0.200px;--s:0.5px;"><span class="k">数据分析</span></div>
<div class="a" style="left:980px;top:86px;width:30px;height:15px;background:#ede8f9;border-radius:3px"></div>
<div class="tl" style="top:84.80px;line-height:16px;font-size:11.0px;color:#a36bf2;left:985.00px;transform-origin:left center;--c:10px;--d:0.000px;"><span class="k">限免</span></div>
<svg style="left:1378.5px;top:87px;" width="12" height="12" viewBox="0 0 12 12" fill="none" stroke="#333333" stroke-width="1.2" stroke-linecap="round" stroke-linejoin="round"><circle cx="6" cy="6" r="5.2" stroke="#666" stroke-width="1.2"/><path d="M6 3.3 V6.2 H8.3" stroke="#666" stroke-width="1.2"/></svg>
<svg style="left:1403.5px;top:88px;" width="10" height="10" viewBox="0 0 10 10" fill="none" stroke="#333333" stroke-width="1.2" stroke-linecap="round" stroke-linejoin="round"><path d="M1 1 L9 9 M9 1 L1 9" stroke="#555" stroke-width="1.3"/></svg>
<div class="a" style="left:1428px;top:142.5px;width:4.5px;height:95px;background:#dadada;border-radius:2px"></div>
<div class="a" style="left:909px;top:146.7px;width:21px;height:21px;border-radius:50%;background:#4db8ec"></div>
<div class="tl" style="top:148.50px;line-height:16px;font-size:8px;color:#e6f5fd;left:913.06px;transform-origin:center center;--c:10.2px;--d:0.200px;">WP</div>
<div class="tl" style="top:146.70px;line-height:16px;font-size:11px;color:#262626;font-weight:bold;left:942.20px;transform-origin:left center;transform:scaleX(0.940);--c:10.2px;--d:0.200px;">WPS_1692599656</div>
<div class="tl" style="top:165.90px;line-height:16px;font-size:11.0px;color:#333;left:942.20px;transform-origin:left center;--c:10.55px;--d:-0.450px;"><span class="k">快速解读表格内容</span></div>
<div class="a" style="left:909.9px;top:221.3px;width:19px;height:19px;border-radius:50%;background:#fff"></div>
<svg style="left:913px;top:225.5px" width="13" height="11" viewBox="0 0 13 11"><defs><linearGradient id="wg2" x1="0" y1="0" x2="1" y2="0"><stop offset="0" stop-color="#3b5cf5"/><stop offset="0.6" stop-color="#8a5cf0"/><stop offset="1" stop-color="#f06a9a"/></linearGradient></defs><path d="M0.8 10 L5 1 L8.2 1 L4 10 Z" fill="url(#wg2)"/><path d="M6.3 5.6 L8.6 4.6 L12.2 10 L9.2 10 Z" fill="#ee6fa6"/></svg>
<div class="tl" style="top:219.90px;line-height:16px;font-size:11px;color:#262626;font-weight:bold;left:942.20px;transform-origin:left center;transform:scaleX(0.920);--c:10.2px;--d:0.200px;">WPS AI</div>
<div class="a" style="left:942px;top:243px;width:95px;height:24px;background:#e8e8e8;border-radius:5px"></div>
<svg style="left:948.5px;top:249px" width="12" height="12" viewBox="0 0 12 12"><ellipse cx="5" cy="6.2" rx="3.9" ry="3.6" stroke="#2a2a2a" stroke-width="1.7" fill="none"/><path d="M2.6 3.8 L7.8 9" stroke="#2a2a2a" stroke-width="1.4" fill="none"/><path d="M8.2 5.6 L10 2 M8.8 4.4 L12 3.2" stroke="#2a2a2a" stroke-width="1.6" fill="none" stroke-linecap="round"/></svg>
<div class="tl" style="top:246.40px;line-height:16px;font-size:11.0px;color:#444;left:967.40px;transform-origin:left center;--c:10.3px;--d:0.300px;"><span class="k">思考</span></div>
<div class="tl" style="top:246.40px;line-height:16px;font-size:11px;color:#444;left:990.50px;transform-origin:left center;transform:scaleX(0.920);--c:10.2px;--d:0.200px;">11</div>
<div class="tl" style="top:246.40px;line-height:16px;font-size:11.0px;color:#444;left:1005.30px;transform-origin:left center;--c:10.3px;--d:0.300px;"><span class="k">秒</span></div>
<svg style="left:1022.5px;top:252.5px" width="8" height="5" viewBox="0 0 8 5" fill="none" stroke="#555" stroke-width="1.1" stroke-linecap="round" stroke-linejoin="round"><path d="M1 4 L4 1 L7 4"/></svg>
<svg style="left:1022px;top:252px" width="8" height="5"></svg>
<div class="a" style="left:942.5px;top:279px;width:1px;height:290px;background:#dedede"></div>
<div class="tl" style="top:275.60px;line-height:16px;font-size:11px;color:#8a8a8a;left:953.60px;transform-origin:left center;--c:10.45px;--d:0.450px;"><span class="k">好的，我需要帮用户生成一个数据分析报告。首先，我得仔细看看用户提供的家电销售数据。数据</span></div>
<div class="tl" style="top:292.10px;line-height:16px;font-size:11px;color:#8a8a8a;left:953.60px;transform-origin:left center;--c:10.45px;--d:0.450px;"><span class="k">里有销售日期、商品名称、大类、小类、销售员、成本价、售价、销售数量、总额、总成本、利</span></div>
<div class="tl" style="top:308.60px;line-height:16px;font-size:11px;color:#8a8a8a;left:953.60px;transform-origin:left center;--c:10.45px;--d:0.450px;"><span class="k">润、所属门店和所属地这些字段。</span></div>
<div class="tl" style="top:333.90px;line-height:16px;font-size:11px;color:#8a8a8a;left:953.60px;transform-origin:left center;--c:10.45px;--d:0.450px;"><span class="k">首先，数据概述部分要简短，得抓住核心主题和趋势。从数据来看，销售日期从</span>2023<span class="k">年</span>4<span class="k">月底到</span>5<span class="k">月</span></div>
<div class="tl" style="top:350.40px;line-height:16px;font-size:11px;color:#8a8a8a;left:953.60px;transform-origin:left center;--c:10.45px;--d:0.450px;"><span class="k">初，涉及多个家电品类，比如冰箱、空调、电视、洗衣机等。利润和销售额的数据都挺高的，尤其</span></div>
<div class="tl" style="top:366.90px;line-height:16px;font-size:11px;color:#8a8a8a;left:953.60px;transform-origin:left center;transform:scaleX(0.992);--c:10.45px;--d:0.450px;"><span class="k">是某些商品比如索尼</span>QLED<span class="k">电视销量很高，利润也大。所以数据概述可能是：“家电销售数据覆盖多</span></div>
<div class="tl" style="top:383.40px;line-height:16px;font-size:11px;color:#8a8a8a;left:953.60px;transform-origin:left center;--c:10.45px;--d:0.450px;"><span class="k">品类，空调与电视贡献主要利润。”</span></div>
<div class="tl" style="top:408.70px;line-height:16px;font-size:11px;color:#8a8a8a;left:953.60px;transform-origin:left center;--c:10.45px;--d:0.450px;"><span class="k">接下来是重要指标。需要选三个最有业务价值的字段。利润是关键指标，直接反映盈利情况。商品</span></div>
<div class="tl" style="top:425.20px;line-height:16px;font-size:11px;color:#8a8a8a;left:953.60px;transform-origin:left center;--c:10.45px;--d:0.450px;"><span class="k">小类可以分析哪些细分产品卖得好。所属地可能显示区域销售差异，帮助调整策略。所以选利润、</span></div>
<div class="tl" style="top:441.70px;line-height:16px;font-size:11px;color:#8a8a8a;left:953.60px;transform-origin:left center;--c:10.45px;--d:0.450px;"><span class="k">商品小类、所属地。</span></div>
<div class="tl" style="top:467.00px;line-height:16px;font-size:11px;color:#8a8a8a;left:953.60px;transform-origin:left center;--c:10.45px;--d:0.450px;"><span class="k">图表分析部分，应该选一个能直观展示重要指标关系的图表。比如各商品小类的利润分布，用柱状</span></div>
<div class="tl" style="top:483.50px;line-height:16px;font-size:11px;color:#8a8a8a;left:953.60px;transform-origin:left center;--c:10.45px;--d:0.450px;"><span class="k">图。这样可以比较不同小类的利润贡献，找出高利润点。</span></div>
<div class="tl" style="top:508.80px;line-height:16px;font-size:11px;color:#8a8a8a;left:953.60px;transform-origin:left center;transform:scaleX(0.991);--c:10.45px;--d:0.450px;"><span class="k">关键洞察方面，首先高利润商品如</span>QLED<span class="k">电视和立式空调的销售集中，可能需要加强这些产品的推</span></div>
<div class="tl" style="top:525.30px;line-height:16px;font-size:11px;color:#8a8a8a;left:953.60px;transform-origin:left center;--c:10.45px;--d:0.450px;"><span class="k">广。其次是区域销售不均，比如福田店和罗湖店销量高，其他地区可能潜力未开发，建议深入分析</span></div>
<div class="tl" style="top:541.80px;line-height:16px;font-size:11px;color:#8a8a8a;left:953.60px;transform-origin:left center;--c:10.45px;--d:0.450px;"><span class="k">区域需求差异。</span></div>
<div class="a" style="left:906.3px;top:582.5px;width:30.6px;height:30.6px;border-radius:50%;background:#fff;border:1px solid #e9e9e9"></div>
<svg style="left:915.5px;top:591.5px;" width="13" height="13" viewBox="0 0 13 13" fill="none" stroke="#333333" stroke-width="1.2" stroke-linecap="round" stroke-linejoin="round"><path d="M10.8 4.5 A5 5 0 1 0 6 11 L3.2 11.5 L4.2 9.8" stroke="#333" stroke-width="1.3"/><path d="M10.3 7.5 V11.5 M8.3 9.5 H12.3" stroke="#333" stroke-width="1.2"/></svg>
<div class="a" style="left:944px;top:582.5px;width:477px;height:61.8px;border-radius:9px;background:#fff;border:1px solid #ececec;overflow:hidden"><div class="a" style="left:0;bottom:0;width:100%;height:2px;background:linear-gradient(90deg,#f7b07e 0%,#ee7ac6 38%,#ae8af2 72%,#5cc0f2 100%)"></div></div>
<div class="tl" style="top:589.60px;line-height:16px;font-size:11.0px;color:#9b9b9b;left:952.50px;transform-origin:left center;--c:10.4px;--d:0.400px;"><span class="k">想让我帮你分析什么</span></div>
<div class="a" style="left:952px;top:615.4px;width:105.5px;height:21.2px;border-radius:5px;background:#fff;border:1px solid #efefef"></div>
<svg style="left:958px;top:620px" width="13" height="12" viewBox="0 0 12 12"><ellipse cx="5" cy="6.2" rx="3.9" ry="3.6" stroke="#5b36d8" stroke-width="1.7" fill="none"/><path d="M2.6 3.8 L7.8 9" stroke="#5b36d8" stroke-width="1.4" fill="none"/><path d="M8.2 5.6 L10 2 M8.8 4.4 L12 3.2" stroke="#5b36d8" stroke-width="1.6" fill="none" stroke-linecap="round"/></svg>
<div class="tl" style="top:617.50px;line-height:16px;font-size:11px;color:#5533d0;left:974.50px;transform-origin:left center;transform:scaleX(0.830);--c:10.2px;--d:0.200px;">DeepSeek R1</div>
<div class="a" style="left:1036px;top:620.5px;width:16px;height:10px;border-radius:5px;background:#6236e8"></div>
<div class="a" style="left:1043.5px;top:621.8px;width:7.4px;height:7.4px;border-radius:50%;background:#fff"></div>
<svg style="left:1376px;top:619.5px" width="14" height="14" viewBox="0 0 14 14"><path d="M8 2.5 Q8.6 6.8 12.5 8 Q8.6 9.2 8 13 Q7.4 9.2 3.5 8 Q7.4 6.8 8 2.5 Z" fill="none" stroke="#c8b6f6" stroke-width="1.2"/><circle cx="3.2" cy="2.8" r="0.9" fill="#c8b6f6"/></svg>
<svg style="left:1398px;top:620px" width="13" height="12" viewBox="0 0 13 12"><path d="M1 1 L12 6 L1 11 L3.5 6 Z" fill="#c6b3f6"/></svg>
<div class="a" style="left:30px;top:120px;width:857px;height:536px;background:#fff;border-radius:4px 6px 6px 3px;box-shadow:1px 0 0 #e4e4e4,-1px 0 0 #e8e8e8,0 1px 0 #e6e6e6"></div>
<div class="a" style="left:97px;top:103px;width:1px;height:17px;background:#dcdcdc"></div>
<div class="a" style="left:166px;top:103px;width:1px;height:17px;background:#dcdcdc"></div>
<div class="a" style="left:234px;top:103px;width:1px;height:17px;background:#dcdcdc"></div>
<div class="a" style="left:302px;top:103px;width:1px;height:17px;background:#dcdcdc"></div>
<div class="a" style="left:370px;top:103px;width:1px;height:17px;background:#dcdcdc"></div>
<div class="a" style="left:439px;top:103px;width:1px;height:17px;background:#dcdcdc"></div>
<div class="a" style="left:507px;top:103px;width:1px;height:17px;background:#dcdcdc"></div>
<div class="a" style="left:575px;top:103px;width:1px;height:17px;background:#dcdcdc"></div>
<div class="a" style="left:643px;top:103px;width:1px;height:17px;background:#dcdcdc"></div>
<div class="a" style="left:712px;top:103px;width:1px;height:17px;background:#dcdcdc"></div>
<div class="a" style="left:780px;top:103px;width:1px;height:17px;background:#dcdcdc"></div>
<div class="a" style="left:848px;top:103px;width:1px;height:17px;background:#dcdcdc"></div>
<div class="a" style="left:780px;top:103px;width:69px;height:17px;background:#dedede"></div>
<div class="a" style="left:0;top:286px;width:30px;height:32px;background:#dfdfdf"></div>
<div class="a" style="left:30px;top:153px;width:845px;height:1px;background:#e2e2e2"></div>
<div class="a" style="left:30px;top:186px;width:845px;height:1px;background:#e2e2e2"></div>
<div class="a" style="left:30px;top:235px;width:845px;height:1px;background:#e2e2e2"></div>
<div class="a" style="left:30px;top:285px;width:845px;height:1px;background:#e2e2e2"></div>
<div class="a" style="left:30px;top:318px;width:845px;height:1px;background:#e2e2e2"></div>
<div class="a" style="left:30px;top:367px;width:845px;height:1px;background:#e2e2e2"></div>
<div class="a" style="left:30px;top:417px;width:845px;height:1px;background:#e2e2e2"></div>
<div class="a" style="left:30px;top:466px;width:845px;height:1px;background:#e2e2e2"></div>
<div class="a" style="left:30px;top:515px;width:845px;height:1px;background:#e2e2e2"></div>
<div class="a" style="left:30px;top:565px;width:845px;height:1px;background:#e2e2e2"></div>
<div class="a" style="left:30px;top:598px;width:845px;height:1px;background:#e2e2e2"></div>
<div class="a" style="left:0;top:153px;width:30px;height:1px;background:#dcdcdc"></div>
<div class="a" style="left:0;top:186px;width:30px;height:1px;background:#dcdcdc"></div>
<div class="a" style="left:0;top:235px;width:30px;height:1px;background:#dcdcdc"></div>
<div class="a" style="left:0;top:285px;width:30px;height:1px;background:#dcdcdc"></div>
<div class="a" style="left:0;top:318px;width:30px;height:1px;background:#dcdcdc"></div>
<div class="a" style="left:0;top:367px;width:30px;height:1px;background:#dcdcdc"></div>
<div class="a" style="left:0;top:417px;width:30px;height:1px;background:#dcdcdc"></div>
<div class="a" style="left:0;top:466px;width:30px;height:1px;background:#dcdcdc"></div>
<div class="a" style="left:0;top:515px;width:30px;height:1px;background:#dcdcdc"></div>
<div class="a" style="left:0;top:565px;width:30px;height:1px;background:#dcdcdc"></div>
<div class="a" style="left:0;top:598px;width:30px;height:1px;background:#dcdcdc"></div>
<div class="a" style="left:0;top:648px;width:30px;height:1px;background:#dcdcdc"></div>
<div class="a" style="left:97px;top:120px;width:1px;height:523.6px;background:#e2e2e2"></div>
<div class="a" style="left:166px;top:120px;width:1px;height:523.6px;background:#e2e2e2"></div>
<div class="a" style="left:234px;top:120px;width:1px;height:523.6px;background:#e2e2e2"></div>
<div class="a" style="left:302px;top:120px;width:1px;height:523.6px;background:#e2e2e2"></div>
<div class="a" style="left:370px;top:120px;width:1px;height:523.6px;background:#e2e2e2"></div>
<div class="a" style="left:439px;top:120px;width:1px;height:523.6px;background:#e2e2e2"></div>
<div class="a" style="left:507px;top:120px;width:1px;height:523.6px;background:#e2e2e2"></div>
<div class="a" style="left:575px;top:120px;width:1px;height:523.6px;background:#e2e2e2"></div>
<div class="a" style="left:643px;top:120px;width:1px;height:523.6px;background:#e2e2e2"></div>
<div class="a" style="left:712px;top:120px;width:1px;height:523.6px;background:#e2e2e2"></div>
<div class="a" style="left:780px;top:120px;width:1px;height:523.6px;background:#e2e2e2"></div>
<div class="a" style="left:848px;top:120px;width:1px;height:523.6px;background:#e2e2e2"></div>
<div class="a" style="left:644px;top:120.5px;width:68.5px;height:164.5px;background:#ffff00"></div>
<div class="a" style="left:644px;top:319px;width:68.5px;height:197px;background:#ffff00"></div>
<div class="a" style="left:644px;top:566px;width:68.5px;height:77.60000000000002px;background:#ffff00"></div>
<div class="a" style="left:848px;top:120px;width:1px;height:523.6px;background:#3aa373"></div>
<div class="a" style="left:780px;top:119px;width:69px;height:2px;background:#21a05a"></div>
<div class="a" style="left:28px;top:286px;width:2px;height:32px;background:#21a05a"></div>
<div class="tl" style="top:102.30px;line-height:16px;font-size:11.0px;color:#5a5a5a;left:31.80px;transform-origin:left center;--c:9.95px;--d:-0.050px;"><span class="k">销售日期</span></div>
<div class="a" style="left:85px;top:107px;width:11px;height:11px;background:#fff;border:1px solid #e4e4e4;border-radius:1px"></div>
<div class="a" style="left:88px;top:111px;width:0;height:0;border-left:2.5px solid transparent;border-right:2.5px solid transparent;border-top:3px solid #1e9b55"></div>
<div class="tl" style="top:102.30px;line-height:16px;font-size:11.0px;color:#5a5a5a;left:98.80px;transform-origin:left center;--c:9.95px;--d:-0.050px;"><span class="k">商品名称</span></div>
<div class="a" style="left:154px;top:107px;width:11px;height:11px;background:#fff;border:1px solid #e4e4e4;border-radius:1px"></div>
<div class="a" style="left:157px;top:111px;width:0;height:0;border-left:2.5px solid transparent;border-right:2.5px solid transparent;border-top:3px solid #1e9b55"></div>
<div class="tl" style="top:102.30px;line-height:16px;font-size:11.0px;color:#5a5a5a;left:167.80px;transform-origin:left center;--c:9.95px;--d:-0.050px;"><span class="k">商品大类</span></div>
<div class="a" style="left:222px;top:107px;width:11px;height:11px;background:#fff;border:1px solid #e4e4e4;border-radius:1px"></div>
<div class="a" style="left:225px;top:111px;width:0;height:0;border-left:2.5px solid transparent;border-right:2.5px solid transparent;border-top:3px solid #1e9b55"></div>
<div class="tl" style="top:102.30px;line-height:16px;font-size:11.0px;color:#5a5a5a;left:235.80px;transform-origin:left center;--c:9.95px;--d:-0.050px;"><span class="k">商品小类</span></div>
<div class="a" style="left:290px;top:107px;width:11px;height:11px;background:#fff;border:1px solid #e4e4e4;border-radius:1px"></div>
<div class="a" style="left:293px;top:111px;width:0;height:0;border-left:2.5px solid transparent;border-right:2.5px solid transparent;border-top:3px solid #1e9b55"></div>
<div class="tl" style="top:102.30px;line-height:16px;font-size:11.0px;color:#5a5a5a;left:303.80px;transform-origin:left center;--c:9.95px;--d:-0.050px;"><span class="k">销售员</span></div>
<div class="a" style="left:358px;top:107px;width:11px;height:11px;background:#fff;border:1px solid #e4e4e4;border-radius:1px"></div>
<div class="a" style="left:361px;top:111px;width:0;height:0;border-left:2.5px solid transparent;border-right:2.5px solid transparent;border-top:3px solid #1e9b55"></div>
<div class="tl" style="top:102.30px;line-height:16px;font-size:11.0px;color:#5a5a5a;left:371.80px;transform-origin:left center;--c:9.95px;--d:-0.050px;"><span class="k">成本价</span></div>
<div class="a" style="left:427px;top:107px;width:11px;height:11px;background:#fff;border:1px solid #e4e4e4;border-radius:1px"></div>
<div class="a" style="left:430px;top:111px;width:0;height:0;border-left:2.5px solid transparent;border-right:2.5px solid transparent;border-top:3px solid #1e9b55"></div>
<div class="tl" style="top:102.30px;line-height:16px;font-size:11.0px;color:#5a5a5a;left:440.80px;transform-origin:left center;--c:9.95px;--d:-0.050px;"><span class="k">售价</span></div>
<div class="a" style="left:495px;top:107px;width:11px;height:11px;background:#fff;border:1px solid #e4e4e4;border-radius:1px"></div>
<div class="a" style="left:498px;top:111px;width:0;height:0;border-left:2.5px solid transparent;border-right:2.5px solid transparent;border-top:3px solid #1e9b55"></div>
<div class="tl" style="top:102.30px;line-height:16px;font-size:11.0px;color:#5a5a5a;left:508.80px;transform-origin:left center;--c:9.95px;--d:-0.050px;"><span class="k">销售数量</span></div>
<div class="a" style="left:563px;top:107px;width:11px;height:11px;background:#fff;border:1px solid #e4e4e4;border-radius:1px"></div>
<div class="a" style="left:566px;top:111px;width:0;height:0;border-left:2.5px solid transparent;border-right:2.5px solid transparent;border-top:3px solid #1e9b55"></div>
<div class="tl" style="top:102.30px;line-height:16px;font-size:11.0px;color:#5a5a5a;left:576.80px;transform-origin:left center;--c:9.95px;--d:-0.050px;"><span class="k">销售总额</span></div>
<div class="a" style="left:631px;top:107px;width:11px;height:11px;background:#fff;border:1px solid #e4e4e4;border-radius:1px"></div>
<div class="a" style="left:634px;top:111px;width:0;height:0;border-left:2.5px solid transparent;border-right:2.5px solid transparent;border-top:3px solid #1e9b55"></div>
<div class="tl" style="top:102.30px;line-height:16px;font-size:11.0px;color:#5a5a5a;left:644.80px;transform-origin:left center;--c:9.95px;--d:-0.050px;"><span class="k">商品总成本</span></div>
<div class="a" style="left:700px;top:107px;width:11px;height:11px;background:#fff;border:1px solid #e4e4e4;border-radius:1px"></div>
<div class="a" style="left:703px;top:111px;width:0;height:0;border-left:2.5px solid transparent;border-right:2.5px solid transparent;border-top:3px solid #1e9b55"></div>
<div class="tl" style="top:102.30px;line-height:16px;font-size:11.0px;color:#5a5a5a;left:713.80px;transform-origin:left center;--c:9.95px;--d:-0.050px;"><span class="k">销售利润</span></div>
<div class="a" style="left:768px;top:107px;width:11px;height:11px;background:#fff;border:1px solid #e4e4e4;border-radius:1px"></div>
<div class="a" style="left:771px;top:111px;width:0;height:0;border-left:2.5px solid transparent;border-right:2.5px solid transparent;border-top:3px solid #1e9b55"></div>
<div class="tl" style="top:102.30px;line-height:16px;font-size:11.0px;color:#5a5a5a;left:781.80px;transform-origin:left center;--c:9.95px;--d:-0.050px;"><span class="k">所属门店</span></div>
<div class="a" style="left:836px;top:107px;width:11px;height:11px;background:#fff;border:1px solid #e4e4e4;border-radius:1px"></div>
<div class="a" style="left:839px;top:111px;width:0;height:0;border-left:2.5px solid transparent;border-right:2.5px solid transparent;border-top:3px solid #1e9b55"></div>
<div class="tl" style="top:103.50px;line-height:16px;font-size:9px;color:#666;left:878.75px;transform-origin:center center;--c:10.2px;--d:0.200px;">M</div>
<svg style="left:12px;top:108px" width="6" height="6"><path d="M5.5 0.5 L5.5 5.5 L0.5 5.5 Z" fill="#6b6b6b"/></svg>
<div class="tl" style="top:128.30px;line-height:16px;font-size:11px;color:#6a6a6a;left:8.88px;transform-origin:center center;transform:scaleX(0.880);--c:10.2px;--d:0.200px;">15</div>
<div class="tl" style="top:161.30px;line-height:16px;font-size:11px;color:#6a6a6a;left:8.88px;transform-origin:center center;transform:scaleX(0.880);--c:10.2px;--d:0.200px;">16</div>
<div class="tl" style="top:202.30px;line-height:16px;font-size:11px;color:#6a6a6a;left:8.88px;transform-origin:center center;transform:scaleX(0.880);--c:10.2px;--d:0.200px;">17</div>
<div class="tl" style="top:251.80px;line-height:16px;font-size:11px;color:#6a6a6a;left:8.88px;transform-origin:center center;transform:scaleX(0.880);--c:10.2px;--d:0.200px;">18</div>
<div class="tl" style="top:293.30px;line-height:16px;font-size:11px;color:#3a3a3a;left:8.88px;transform-origin:center center;transform:scaleX(0.880);--c:10.2px;--d:0.200px;">19</div>
<div class="tl" style="top:334.30px;line-height:16px;font-size:11px;color:#6a6a6a;left:8.88px;transform-origin:center center;transform:scaleX(0.880);--c:10.2px;--d:0.200px;">20</div>
<div class="tl" style="top:383.80px;line-height:16px;font-size:11px;color:#6a6a6a;left:8.88px;transform-origin:center center;transform:scaleX(0.880);--c:10.2px;--d:0.200px;">21</div>
<div class="tl" style="top:433.30px;line-height:16px;font-size:11px;color:#6a6a6a;left:8.88px;transform-origin:center center;transform:scaleX(0.880);--c:10.2px;--d:0.200px;">22</div>
<div class="tl" style="top:482.30px;line-height:16px;font-size:11px;color:#6a6a6a;left:8.88px;transform-origin:center center;transform:scaleX(0.880);--c:10.2px;--d:0.200px;">23</div>
<div class="tl" style="top:531.80px;line-height:16px;font-size:11px;color:#6a6a6a;left:8.88px;transform-origin:center center;transform:scaleX(0.880);--c:10.2px;--d:0.200px;">24</div>
<div class="tl" style="top:573.30px;line-height:16px;font-size:11px;color:#6a6a6a;left:8.88px;transform-origin:center center;transform:scaleX(0.880);--c:10.2px;--d:0.200px;">25</div>
<div class="tl" style="top:614.80px;line-height:16px;font-size:11px;color:#6a6a6a;left:8.88px;transform-origin:center center;transform:scaleX(0.880);--c:10.2px;--d:0.200px;">26</div>
<div class="tl" style="top:128.30px;line-height:16px;font-size:11.0px;right:1344.20px;transform-origin:right center;transform:scaleX(1.044);--c:10.2px;--d:0.200px;">2023/5/3</div>
<div class="tl" style="top:120.20px;line-height:16px;font-size:11.0px;left:100.00px;transform-origin:left center;transform:scaleX(0.942);--c:10.2px;--d:0.200px;"><span class="k">美的空调</span>KFR-</div>
<div class="tl" style="top:136.40px;line-height:16px;font-size:11.0px;left:100.00px;transform-origin:left center;transform:scaleX(0.928);--c:10.2px;--d:0.200px;">35GW/FC23</div>
<div class="tl" style="top:128.30px;line-height:16px;font-size:11.0px;left:168.00px;transform-origin:left center;--c:10.2px;--d:0.200px;"><span class="k">空调</span></div>
<div class="tl" style="top:128.30px;line-height:16px;font-size:11.0px;left:236.00px;transform-origin:left center;--c:10.2px;--d:0.200px;"><span class="k">壁挂式空调</span></div>
<div class="tl" style="top:128.30px;line-height:16px;font-size:11.0px;left:304.00px;transform-origin:left center;--c:10.2px;--d:0.200px;"><span class="k">赖娜</span></div>
<div class="tl" style="top:128.30px;line-height:16px;font-size:11.0px;right:1003.20px;transform-origin:right center;transform:scaleX(0.935);--c:10.2px;--d:0.200px;">¥ 1,799.00</div>
<div class="tl" style="top:128.30px;line-height:16px;font-size:11.0px;right:935.20px;transform-origin:right center;transform:scaleX(0.935);--c:10.2px;--d:0.200px;">¥ 2,399.00</div>
<div class="tl" style="top:128.30px;line-height:16px;font-size:11.0px;right:867.20px;transform-origin:right center;transform:scaleX(1.022);--c:10.2px;--d:0.200px;">2</div>
<div class="tl" style="top:128.30px;line-height:16px;font-size:11.0px;right:799.20px;transform-origin:right center;transform:scaleX(0.935);--c:10.2px;--d:0.200px;">¥ 4,798.00</div>
<div class="tl" style="top:128.30px;line-height:16px;font-size:11.0px;right:730.20px;transform-origin:right center;transform:scaleX(0.935);--c:10.2px;--d:0.200px;">¥ 3,598.00</div>
<div class="tl" style="top:128.30px;line-height:16px;font-size:11.0px;right:662.20px;transform-origin:right center;transform:scaleX(0.935);--c:10.2px;--d:0.200px;">¥ 1,200.00</div>
<div class="tl" style="top:128.30px;line-height:16px;font-size:11.0px;left:782.00px;transform-origin:left center;--c:10.2px;--d:0.200px;"><span class="k">龙华店</span></div>
<div class="tl" style="top:129.30px;line-height:16px;font-size:11.0px;left:851.00px;transform-origin:left center;--c:11.3px;--d:0.300px;"><span class="k">宝鸡</span></div>
<div class="tl" style="top:161.30px;line-height:16px;font-size:11.0px;right:1344.20px;transform-origin:right center;transform:scaleX(1.044);--c:10.2px;--d:0.200px;">2023/5/3</div>
<div class="tl" style="top:153.20px;line-height:16px;font-size:11.0px;left:100.00px;transform-origin:left center;transform:scaleX(0.942);--c:10.2px;--d:0.200px;"><span class="k">格力空调</span>KFR-</div>
<div class="tl" style="top:169.40px;line-height:16px;font-size:11.0px;left:100.00px;transform-origin:left center;transform:scaleX(0.897);--c:10.2px;--d:0.200px;">35GW/FLD</div>
<div class="tl" style="top:161.30px;line-height:16px;font-size:11.0px;left:168.00px;transform-origin:left center;--c:10.2px;--d:0.200px;"><span class="k">空调</span></div>
<div class="tl" style="top:161.30px;line-height:16px;font-size:11.0px;left:236.00px;transform-origin:left center;--c:10.2px;--d:0.200px;"><span class="k">壁挂式空调</span></div>
<div class="tl" style="top:161.30px;line-height:16px;font-size:11.0px;left:304.00px;transform-origin:left center;--c:10.2px;--d:0.200px;"><span class="k">程凯</span></div>
<div class="tl" style="top:161.30px;line-height:16px;font-size:11.0px;right:1003.20px;transform-origin:right center;transform:scaleX(0.935);--c:10.2px;--d:0.200px;">¥ 1,899.00</div>
<div class="tl" style="top:161.30px;line-height:16px;font-size:11.0px;right:935.20px;transform-origin:right center;transform:scaleX(0.935);--c:10.2px;--d:0.200px;">¥ 2,399.00</div>
<div class="tl" style="top:161.30px;line-height:16px;font-size:11.0px;right:867.20px;transform-origin:right center;transform:scaleX(1.022);--c:10.2px;--d:0.200px;">13</div>
<div class="tl" style="top:161.30px;line-height:16px;font-size:11.0px;right:799.20px;transform-origin:right center;transform:scaleX(0.944);--c:10.2px;--d:0.200px;">¥ 31,187.00</div>
<div class="tl" style="top:161.30px;line-height:16px;font-size:11.0px;right:730.20px;transform-origin:right center;transform:scaleX(0.944);--c:10.2px;--d:0.200px;">¥ 24,687.00</div>
<div class="tl" style="top:161.30px;line-height:16px;font-size:11.0px;right:662.20px;transform-origin:right center;transform:scaleX(0.935);--c:10.2px;--d:0.200px;">¥ 6,500.00</div>
<div class="tl" style="top:161.30px;line-height:16px;font-size:11.0px;left:782.00px;transform-origin:left center;--c:10.2px;--d:0.200px;"><span class="k">龙华店</span></div>
<div class="tl" style="top:162.30px;line-height:16px;font-size:11.0px;left:851.00px;transform-origin:left center;--c:11.3px;--d:0.300px;"><span class="k">咸阳</span></div>
<div class="tl" style="top:202.30px;line-height:16px;font-size:11.0px;right:1344.20px;transform-origin:right center;transform:scaleX(1.044);--c:10.2px;--d:0.200px;">2023/5/3</div>
<div class="tl" style="top:186.10px;line-height:16px;font-size:11.0px;left:100.00px;transform-origin:left center;--c:10.2px;--d:0.200px;"><span class="k">三星空调</span></div>
<div class="tl" style="top:202.30px;line-height:16px;font-size:11.0px;left:100.00px;transform-origin:left center;transform:scaleX(0.868);--c:10.2px;--d:0.200px;">AR09JPFSAW</div>
<div class="tl" style="top:218.50px;line-height:16px;font-size:11.0px;left:100.00px;transform-origin:left center;transform:scaleX(0.836);--c:10.2px;--d:0.200px;">K</div>
<div class="tl" style="top:202.30px;line-height:16px;font-size:11.0px;left:168.00px;transform-origin:left center;--c:10.2px;--d:0.200px;"><span class="k">空调</span></div>
<div class="tl" style="top:202.30px;line-height:16px;font-size:11.0px;left:236.00px;transform-origin:left center;--c:10.2px;--d:0.200px;"><span class="k">壁挂式空调</span></div>
<div class="tl" style="top:202.30px;line-height:16px;font-size:11.0px;left:304.00px;transform-origin:left center;--c:10.2px;--d:0.200px;"><span class="k">曹荣</span></div>
<div class="tl" style="top:202.30px;line-height:16px;font-size:11.0px;right:1003.20px;transform-origin:right center;transform:scaleX(0.935);--c:10.2px;--d:0.200px;">¥ 1,699.00</div>
<div class="tl" style="top:202.30px;line-height:16px;font-size:11.0px;right:935.20px;transform-origin:right center;transform:scaleX(0.935);--c:10.2px;--d:0.200px;">¥ 2,199.00</div>
<div class="tl" style="top:202.30px;line-height:16px;font-size:11.0px;right:867.20px;transform-origin:right center;transform:scaleX(1.022);--c:10.2px;--d:0.200px;">15</div>
<div class="tl" style="top:202.30px;line-height:16px;font-size:11.0px;right:799.20px;transform-origin:right center;transform:scaleX(0.944);--c:10.2px;--d:0.200px;">¥ 32,985.00</div>
<div class="tl" style="top:202.30px;line-height:16px;font-size:11.0px;right:730.20px;transform-origin:right center;transform:scaleX(0.944);--c:10.2px;--d:0.200px;">¥ 25,485.00</div>
<div class="tl" style="top:202.30px;line-height:16px;font-size:11.0px;right:662.20px;transform-origin:right center;transform:scaleX(0.935);--c:10.2px;--d:0.200px;">¥ 7,500.00</div>
<div class="tl" style="top:202.30px;line-height:16px;font-size:11.0px;left:782.00px;transform-origin:left center;--c:10.2px;--d:0.200px;"><span class="k">福田店</span></div>
<div class="tl" style="top:203.30px;line-height:16px;font-size:11.0px;left:851.00px;transform-origin:left center;--c:11.3px;--d:0.300px;"><span class="k">渭南</span></div>
<div class="tl" style="top:251.80px;line-height:16px;font-size:11.0px;right:1344.20px;transform-origin:right center;transform:scaleX(1.044);--c:10.2px;--d:0.200px;">2023/5/3</div>
<div class="tl" style="top:235.60px;line-height:16px;font-size:11.0px;left:100.00px;transform-origin:left center;transform:scaleX(0.932);--c:10.2px;--d:0.200px;">LG<span class="k">空调</span></div>
<div class="tl" style="top:251.80px;line-height:16px;font-size:11.0px;left:100.00px;transform-origin:left center;transform:scaleX(0.911);--c:10.2px;--d:0.200px;">S3NQ22JA3</div>
<div class="tl" style="top:268.00px;line-height:16px;font-size:11.0px;left:100.00px;transform-origin:left center;transform:scaleX(0.836);--c:10.2px;--d:0.200px;">WC</div>
<div class="tl" style="top:251.80px;line-height:16px;font-size:11.0px;left:168.00px;transform-origin:left center;--c:10.2px;--d:0.200px;"><span class="k">空调</span></div>
<div class="tl" style="top:251.80px;line-height:16px;font-size:11.0px;left:236.00px;transform-origin:left center;--c:10.2px;--d:0.200px;"><span class="k">壁挂式空调</span></div>
<div class="tl" style="top:251.80px;line-height:16px;font-size:11.0px;left:304.00px;transform-origin:left center;--c:10.2px;--d:0.200px;"><span class="k">冯欣</span></div>
<div class="tl" style="top:251.80px;line-height:16px;font-size:11.0px;right:1003.20px;transform-origin:right center;transform:scaleX(0.935);--c:10.2px;--d:0.200px;">¥ 2,299.00</div>
<div class="tl" style="top:251.80px;line-height:16px;font-size:11.0px;right:935.20px;transform-origin:right center;transform:scaleX(0.935);--c:10.2px;--d:0.200px;">¥ 2,899.00</div>
<div class="tl" style="top:251.80px;line-height:16px;font-size:11.0px;right:867.20px;transform-origin:right center;transform:scaleX(1.022);--c:10.2px;--d:0.200px;">10</div>
<div class="tl" style="top:251.80px;line-height:16px;font-size:11.0px;right:799.20px;transform-origin:right center;transform:scaleX(0.944);--c:10.2px;--d:0.200px;">¥ 28,990.00</div>
<div class="tl" style="top:251.80px;line-height:16px;font-size:11.0px;right:730.20px;transform-origin:right center;transform:scaleX(0.944);--c:10.2px;--d:0.200px;">¥ 22,990.00</div>
<div class="tl" style="top:251.80px;line-height:16px;font-size:11.0px;right:662.20px;transform-origin:right center;transform:scaleX(0.935);--c:10.2px;--d:0.200px;">¥ 6,000.00</div>
<div class="tl" style="top:251.80px;line-height:16px;font-size:11.0px;left:782.00px;transform-origin:left center;--c:10.2px;--d:0.200px;"><span class="k">罗湖店</span></div>
<div class="tl" style="top:252.80px;line-height:16px;font-size:11.0px;left:851.00px;transform-origin:left center;--c:11.3px;--d:0.300px;"><span class="k">杨凌</span></div>
<div class="tl" style="top:293.30px;line-height:16px;font-size:11.0px;right:1344.20px;transform-origin:right center;transform:scaleX(1.044);--c:10.2px;--d:0.200px;">2023/5/3</div>
<div class="tl" style="top:285.20px;line-height:16px;font-size:11.0px;left:100.00px;transform-origin:left center;transform:scaleX(0.940);--c:10.2px;--d:0.200px;"><span class="k">海尔空调</span>HSU-</div>
<div class="tl" style="top:301.40px;line-height:16px;font-size:11.0px;left:100.00px;transform-origin:left center;transform:scaleX(0.931);--c:10.2px;--d:0.200px;">09VNH18</div>
<div class="tl" style="top:293.30px;line-height:16px;font-size:11.0px;left:168.00px;transform-origin:left center;--c:10.2px;--d:0.200px;"><span class="k">空调</span></div>
<div class="tl" style="top:293.30px;line-height:16px;font-size:11.0px;left:236.00px;transform-origin:left center;--c:10.2px;--d:0.200px;"><span class="k">壁挂式空调</span></div>
<div class="tl" style="top:293.30px;line-height:16px;font-size:11.0px;left:304.00px;transform-origin:left center;--c:10.2px;--d:0.200px;"><span class="k">宋洁</span></div>
<div class="tl" style="top:293.30px;line-height:16px;font-size:11.0px;right:1003.20px;transform-origin:right center;transform:scaleX(0.935);--c:10.2px;--d:0.200px;">¥ 1,399.00</div>
<div class="tl" style="top:293.30px;line-height:16px;font-size:11.0px;right:935.20px;transform-origin:right center;transform:scaleX(0.935);--c:10.2px;--d:0.200px;">¥ 1,799.00</div>
<div class="tl" style="top:293.30px;line-height:16px;font-size:11.0px;right:867.20px;transform-origin:right center;transform:scaleX(1.022);--c:10.2px;--d:0.200px;">1</div>
<div class="tl" style="top:293.30px;line-height:16px;font-size:11.0px;right:799.20px;transform-origin:right center;transform:scaleX(0.935);--c:10.2px;--d:0.200px;">¥ 1,799.00</div>
<div class="tl" style="top:293.30px;line-height:16px;font-size:11.0px;right:730.20px;transform-origin:right center;transform:scaleX(0.935);--c:10.2px;--d:0.200px;">¥ 1,399.00</div>
<div class="tl" style="top:293.30px;line-height:16px;font-size:11.0px;right:662.20px;transform-origin:right center;transform:scaleX(0.938);--c:10.2px;--d:0.200px;">¥ 400.00</div>
<div class="tl" style="top:293.30px;line-height:16px;font-size:11.0px;left:782.00px;transform-origin:left center;--c:10.2px;--d:0.200px;"><span class="k">福田店</span></div>
<div class="tl" style="top:294.30px;line-height:16px;font-size:11.0px;left:851.00px;transform-origin:left center;--c:11.3px;--d:0.300px;"><span class="k">虢镇</span></div>
<div class="tl" style="top:334.30px;line-height:16px;font-size:11.0px;right:1344.20px;transform-origin:right center;transform:scaleX(1.044);--c:10.2px;--d:0.200px;">2023/5/3</div>
<div class="tl" style="top:318.10px;line-height:16px;font-size:11.0px;left:100.00px;transform-origin:left center;transform:scaleX(0.942);--c:10.2px;--d:0.200px;"><span class="k">海尔空调</span>KFR-</div>
<div class="tl" style="top:334.30px;line-height:16px;font-size:11.0px;left:100.00px;transform-origin:left center;transform:scaleX(0.926);--c:10.2px;--d:0.200px;">35GW/08GA</div>
<div class="tl" style="top:350.50px;line-height:16px;font-size:11.0px;left:100.00px;transform-origin:left center;transform:scaleX(0.919);--c:10.2px;--d:0.200px;">C22Y</div>
<div class="tl" style="top:334.30px;line-height:16px;font-size:11.0px;left:168.00px;transform-origin:left center;--c:10.2px;--d:0.200px;"><span class="k">空调</span></div>
<div class="tl" style="top:334.30px;line-height:16px;font-size:11.0px;left:236.00px;transform-origin:left center;--c:10.2px;--d:0.200px;"><span class="k">立柜式空调</span></div>
<div class="tl" style="top:334.30px;line-height:16px;font-size:11.0px;left:304.00px;transform-origin:left center;--c:10.2px;--d:0.200px;"><span class="k">管峰</span></div>
<div class="tl" style="top:334.30px;line-height:16px;font-size:11.0px;right:1003.20px;transform-origin:right center;transform:scaleX(0.935);--c:10.2px;--d:0.200px;">¥ 2,399.00</div>
<div class="tl" style="top:334.30px;line-height:16px;font-size:11.0px;right:935.20px;transform-origin:right center;transform:scaleX(0.935);--c:10.2px;--d:0.200px;">¥ 2,999.00</div>
<div class="tl" style="top:334.30px;line-height:16px;font-size:11.0px;right:867.20px;transform-origin:right center;transform:scaleX(1.022);--c:10.2px;--d:0.200px;">10</div>
<div class="tl" style="top:334.30px;line-height:16px;font-size:11.0px;right:799.20px;transform-origin:right center;transform:scaleX(0.944);--c:10.2px;--d:0.200px;">¥ 29,990.00</div>
<div class="tl" style="top:334.30px;line-height:16px;font-size:11.0px;right:730.20px;transform-origin:right center;transform:scaleX(0.944);--c:10.2px;--d:0.200px;">¥ 23,990.00</div>
<div class="tl" style="top:334.30px;line-height:16px;font-size:11.0px;right:662.20px;transform-origin:right center;transform:scaleX(0.935);--c:10.2px;--d:0.200px;">¥ 6,000.00</div>
<div class="tl" style="top:334.30px;line-height:16px;font-size:11.0px;left:782.00px;transform-origin:left center;--c:10.2px;--d:0.200px;"><span class="k">罗湖店</span></div>
<div class="tl" style="top:335.30px;line-height:16px;font-size:11.0px;left:851.00px;transform-origin:left center;--c:11.3px;--d:0.300px;"><span class="k">西安</span></div>
<div class="tl" style="top:383.80px;line-height:16px;font-size:11.0px;right:1344.20px;transform-origin:right center;transform:scaleX(1.044);--c:10.2px;--d:0.200px;">2023/5/3</div>
<div class="tl" style="top:367.60px;line-height:16px;font-size:11.0px;left:100.00px;transform-origin:left center;transform:scaleX(0.887);--c:10.2px;--d:0.200px;">TCL<span class="k">空调</span>KFRd-</div>
<div class="tl" style="top:383.80px;line-height:16px;font-size:11.0px;left:100.00px;transform-origin:left center;transform:scaleX(0.918);--c:10.2px;--d:0.200px;">35GW/08TAC</div>
<div class="tl" style="top:400.00px;line-height:16px;font-size:11.0px;left:100.00px;transform-origin:left center;transform:scaleX(0.952);--c:10.2px;--d:0.200px;">22Y</div>
<div class="tl" style="top:383.80px;line-height:16px;font-size:11.0px;left:168.00px;transform-origin:left center;--c:10.2px;--d:0.200px;"><span class="k">空调</span></div>
<div class="tl" style="top:383.80px;line-height:16px;font-size:11.0px;left:236.00px;transform-origin:left center;--c:10.2px;--d:0.200px;"><span class="k">立柜式空调</span></div>
<div class="tl" style="top:383.80px;line-height:16px;font-size:11.0px;left:304.00px;transform-origin:left center;--c:10.2px;--d:0.200px;"><span class="k">田晓</span></div>
<div class="tl" style="top:383.80px;line-height:16px;font-size:11.0px;right:1003.20px;transform-origin:right center;transform:scaleX(0.935);--c:10.2px;--d:0.200px;">¥ 1,999.00</div>
<div class="tl" style="top:383.80px;line-height:16px;font-size:11.0px;right:935.20px;transform-origin:right center;transform:scaleX(0.935);--c:10.2px;--d:0.200px;">¥ 2,499.00</div>
<div class="tl" style="top:383.80px;line-height:16px;font-size:11.0px;right:867.20px;transform-origin:right center;transform:scaleX(1.022);--c:10.2px;--d:0.200px;">5</div>
<div class="tl" style="top:383.80px;line-height:16px;font-size:11.0px;right:799.20px;transform-origin:right center;transform:scaleX(0.944);--c:10.2px;--d:0.200px;">¥ 12,495.00</div>
<div class="tl" style="top:383.80px;line-height:16px;font-size:11.0px;right:730.20px;transform-origin:right center;transform:scaleX(0.935);--c:10.2px;--d:0.200px;">¥ 9,995.00</div>
<div class="tl" style="top:383.80px;line-height:16px;font-size:11.0px;right:662.20px;transform-origin:right center;transform:scaleX(0.935);--c:10.2px;--d:0.200px;">¥ 2,500.00</div>
<div class="tl" style="top:383.80px;line-height:16px;font-size:11.0px;left:782.00px;transform-origin:left center;--c:10.2px;--d:0.200px;"><span class="k">龙华店</span></div>
<div class="tl" style="top:384.80px;line-height:16px;font-size:11.0px;left:851.00px;transform-origin:left center;--c:11.3px;--d:0.300px;"><span class="k">宝鸡</span></div>
<div class="tl" style="top:433.30px;line-height:16px;font-size:11.0px;right:1344.20px;transform-origin:right center;transform:scaleX(1.044);--c:10.2px;--d:0.200px;">2023/5/2</div>
<div class="tl" style="top:417.10px;line-height:16px;font-size:11.0px;left:100.00px;transform-origin:left center;transform:scaleX(0.942);--c:10.2px;--d:0.200px;"><span class="k">格力空调</span>KFR-</div>
<div class="tl" style="top:433.30px;line-height:16px;font-size:11.0px;left:100.00px;transform-origin:left center;transform:scaleX(0.927);--c:10.2px;--d:0.200px;">35GW/09NA</div>
<div class="tl" style="top:449.50px;line-height:16px;font-size:11.0px;left:100.00px;transform-origin:left center;transform:scaleX(0.921);--c:10.2px;--d:0.200px;">A3</div>
<div class="tl" style="top:433.30px;line-height:16px;font-size:11.0px;left:168.00px;transform-origin:left center;--c:10.2px;--d:0.200px;"><span class="k">空调</span></div>
<div class="tl" style="top:433.30px;line-height:16px;font-size:11.0px;left:236.00px;transform-origin:left center;--c:10.2px;--d:0.200px;"><span class="k">立柜式空调</span></div>
<div class="tl" style="top:433.30px;line-height:16px;font-size:11.0px;left:304.00px;transform-origin:left center;--c:10.2px;--d:0.200px;"><span class="k">龚梓</span></div>
<div class="tl" style="top:433.30px;line-height:16px;font-size:11.0px;right:1003.20px;transform-origin:right center;transform:scaleX(0.935);--c:10.2px;--d:0.200px;">¥ 2,399.00</div>
<div class="tl" style="top:433.30px;line-height:16px;font-size:11.0px;right:935.20px;transform-origin:right center;transform:scaleX(0.935);--c:10.2px;--d:0.200px;">¥ 2,999.00</div>
<div class="tl" style="top:433.30px;line-height:16px;font-size:11.0px;right:867.20px;transform-origin:right center;transform:scaleX(1.022);--c:10.2px;--d:0.200px;">2</div>
<div class="tl" style="top:433.30px;line-height:16px;font-size:11.0px;right:799.20px;transform-origin:right center;transform:scaleX(0.935);--c:10.2px;--d:0.200px;">¥ 5,998.00</div>
<div class="tl" style="top:433.30px;line-height:16px;font-size:11.0px;right:730.20px;transform-origin:right center;transform:scaleX(0.935);--c:10.2px;--d:0.200px;">¥ 4,798.00</div>
<div class="tl" style="top:433.30px;line-height:16px;font-size:11.0px;right:662.20px;transform-origin:right center;transform:scaleX(0.935);--c:10.2px;--d:0.200px;">¥ 1,200.00</div>
<div class="tl" style="top:433.30px;line-height:16px;font-size:11.0px;left:782.00px;transform-origin:left center;--c:10.2px;--d:0.200px;"><span class="k">福田店</span></div>
<div class="tl" style="top:434.30px;line-height:16px;font-size:11.0px;left:851.00px;transform-origin:left center;--c:11.3px;--d:0.300px;"><span class="k">咸阳</span></div>
<div class="tl" style="top:482.30px;line-height:16px;font-size:11.0px;right:1344.20px;transform-origin:right center;transform:scaleX(1.044);--c:10.2px;--d:0.200px;">2023/5/2</div>
<div class="tl" style="top:466.10px;line-height:16px;font-size:11.0px;left:100.00px;transform-origin:left center;transform:scaleX(0.942);--c:10.2px;--d:0.200px;"><span class="k">美的空调</span>KFR-</div>
<div class="tl" style="top:482.30px;line-height:16px;font-size:11.0px;left:100.00px;transform-origin:left center;transform:scaleX(0.920);--c:10.2px;--d:0.200px;">35GW/01LZB</div>
<div class="tl" style="top:498.50px;line-height:16px;font-size:11.0px;left:100.00px;transform-origin:left center;transform:scaleX(1.022);--c:10.2px;--d:0.200px;">23</div>
<div class="tl" style="top:482.30px;line-height:16px;font-size:11.0px;left:168.00px;transform-origin:left center;--c:10.2px;--d:0.200px;"><span class="k">空调</span></div>
<div class="tl" style="top:482.30px;line-height:16px;font-size:11.0px;left:236.00px;transform-origin:left center;--c:10.2px;--d:0.200px;"><span class="k">立柜式空调</span></div>
<div class="tl" style="top:482.30px;line-height:16px;font-size:11.0px;left:304.00px;transform-origin:left center;--c:10.2px;--d:0.200px;"><span class="k">韩雪</span></div>
<div class="tl" style="top:482.30px;line-height:16px;font-size:11.0px;right:1003.20px;transform-origin:right center;transform:scaleX(0.935);--c:10.2px;--d:0.200px;">¥ 2,299.00</div>
<div class="tl" style="top:482.30px;line-height:16px;font-size:11.0px;right:935.20px;transform-origin:right center;transform:scaleX(0.935);--c:10.2px;--d:0.200px;">¥ 2,999.00</div>
<div class="tl" style="top:482.30px;line-height:16px;font-size:11.0px;right:867.20px;transform-origin:right center;transform:scaleX(1.022);--c:10.2px;--d:0.200px;">18</div>
<div class="tl" style="top:482.30px;line-height:16px;font-size:11.0px;right:799.20px;transform-origin:right center;transform:scaleX(0.944);--c:10.2px;--d:0.200px;">¥ 53,982.00</div>
<div class="tl" style="top:482.30px;line-height:16px;font-size:11.0px;right:730.20px;transform-origin:right center;transform:scaleX(0.944);--c:10.2px;--d:0.200px;">¥ 41,382.00</div>
<div class="tl" style="top:482.30px;line-height:16px;font-size:11.0px;right:662.20px;transform-origin:right center;transform:scaleX(0.944);--c:10.2px;--d:0.200px;">¥ 12,600.00</div>
<div class="tl" style="top:482.30px;line-height:16px;font-size:11.0px;left:782.00px;transform-origin:left center;--c:10.2px;--d:0.200px;"><span class="k">福田店</span></div>
<div class="tl" style="top:483.30px;line-height:16px;font-size:11.0px;left:851.00px;transform-origin:left center;--c:11.3px;--d:0.300px;"><span class="k">渭南</span></div>
<div class="tl" style="top:531.80px;line-height:16px;font-size:11.0px;right:1344.20px;transform-origin:right center;transform:scaleX(1.044);--c:10.2px;--d:0.200px;">2023/5/2</div>
<div class="tl" style="top:515.60px;line-height:16px;font-size:11.0px;left:100.00px;transform-origin:left center;transform:scaleX(0.942);--c:10.2px;--d:0.200px;"><span class="k">长虹空调</span>KFR-</div>
<div class="tl" style="top:531.80px;line-height:16px;font-size:11.0px;left:100.00px;transform-origin:left center;transform:scaleX(0.926);--c:10.2px;--d:0.200px;">35GW/13GA</div>
<div class="tl" style="top:548.00px;line-height:16px;font-size:11.0px;left:100.00px;transform-origin:left center;transform:scaleX(0.952);--c:10.2px;--d:0.200px;">E23</div>
<div class="tl" style="top:531.80px;line-height:16px;font-size:11.0px;left:168.00px;transform-origin:left center;--c:10.2px;--d:0.200px;"><span class="k">空调</span></div>
<div class="tl" style="top:531.80px;line-height:16px;font-size:11.0px;left:236.00px;transform-origin:left center;--c:10.2px;--d:0.200px;"><span class="k">立柜式空调</span></div>
<div class="tl" style="top:531.80px;line-height:16px;font-size:11.0px;left:304.00px;transform-origin:left center;--c:10.2px;--d:0.200px;"><span class="k">孟阳</span></div>
<div class="tl" style="top:531.80px;line-height:16px;font-size:11.0px;right:1003.20px;transform-origin:right center;transform:scaleX(0.935);--c:10.2px;--d:0.200px;">¥ 1,999.00</div>
<div class="tl" style="top:531.80px;line-height:16px;font-size:11.0px;right:935.20px;transform-origin:right center;transform:scaleX(0.935);--c:10.2px;--d:0.200px;">¥ 2,599.00</div>
<div class="tl" style="top:531.80px;line-height:16px;font-size:11.0px;right:867.20px;transform-origin:right center;transform:scaleX(1.022);--c:10.2px;--d:0.200px;">1</div>
<div class="tl" style="top:531.80px;line-height:16px;font-size:11.0px;right:799.20px;transform-origin:right center;transform:scaleX(0.935);--c:10.2px;--d:0.200px;">¥ 2,599.00</div>
<div class="tl" style="top:531.80px;line-height:16px;font-size:11.0px;right:730.20px;transform-origin:right center;transform:scaleX(0.935);--c:10.2px;--d:0.200px;">¥ 1,999.00</div>
<div class="tl" style="top:531.80px;line-height:16px;font-size:11.0px;right:662.20px;transform-origin:right center;transform:scaleX(0.938);--c:10.2px;--d:0.200px;">¥ 600.00</div>
<div class="tl" style="top:531.80px;line-height:16px;font-size:11.0px;left:782.00px;transform-origin:left center;--c:10.2px;--d:0.200px;"><span class="k">龙华店</span></div>
<div class="tl" style="top:532.80px;line-height:16px;font-size:11.0px;left:851.00px;transform-origin:left center;--c:11.3px;--d:0.300px;"><span class="k">杨凌</span></div>
<div class="tl" style="top:573.30px;line-height:16px;font-size:11.0px;right:1344.20px;transform-origin:right center;transform:scaleX(1.044);--c:10.2px;--d:0.200px;">2023/5/2</div>
<div class="tl" style="top:565.20px;line-height:16px;font-size:11.0px;left:100.00px;transform-origin:left center;--c:10.2px;--d:0.200px;"><span class="k">海尔洗衣机</span></div>
<div class="tl" style="top:581.40px;line-height:16px;font-size:11.0px;left:100.00px;transform-origin:left center;transform:scaleX(0.931);--c:10.2px;--d:0.200px;">XPB35-918S</div>
<div class="tl" style="top:573.30px;line-height:16px;font-size:11.0px;left:168.00px;transform-origin:left center;--c:10.2px;--d:0.200px;"><span class="k">洗衣机</span></div>
<div class="tl" style="top:573.30px;line-height:16px;font-size:11.0px;left:236.00px;transform-origin:left center;--c:10.2px;--d:0.200px;"><span class="k">波轮洗衣机</span></div>
<div class="tl" style="top:573.30px;line-height:16px;font-size:11.0px;left:304.00px;transform-origin:left center;--c:10.2px;--d:0.200px;"><span class="k">赖娜</span></div>
<div class="tl" style="top:573.30px;line-height:16px;font-size:11.0px;right:1003.20px;transform-origin:right center;transform:scaleX(0.938);--c:10.2px;--d:0.200px;">¥ 499.00</div>
<div class="tl" style="top:573.30px;line-height:16px;font-size:11.0px;right:935.20px;transform-origin:right center;transform:scaleX(0.938);--c:10.2px;--d:0.200px;">¥ 699.00</div>
<div class="tl" style="top:573.30px;line-height:16px;font-size:11.0px;right:867.20px;transform-origin:right center;transform:scaleX(1.022);--c:10.2px;--d:0.200px;">70</div>
<div class="tl" style="top:573.30px;line-height:16px;font-size:11.0px;right:799.20px;transform-origin:right center;transform:scaleX(0.944);--c:10.2px;--d:0.200px;">¥ 48,930.00</div>
<div class="tl" style="top:573.30px;line-height:16px;font-size:11.0px;right:730.20px;transform-origin:right center;transform:scaleX(0.944);--c:10.2px;--d:0.200px;">¥ 34,930.00</div>
<div class="tl" style="top:573.30px;line-height:16px;font-size:11.0px;right:662.20px;transform-origin:right center;transform:scaleX(0.944);--c:10.2px;--d:0.200px;">¥ 14,000.00</div>
<div class="tl" style="top:573.30px;line-height:16px;font-size:11.0px;left:782.00px;transform-origin:left center;--c:10.2px;--d:0.200px;"><span class="k">龙华店</span></div>
<div class="tl" style="top:574.30px;line-height:16px;font-size:11.0px;left:851.00px;transform-origin:left center;--c:11.3px;--d:0.300px;"><span class="k">虢镇</span></div>
<div class="tl" style="top:614.80px;line-height:16px;font-size:11.0px;right:1344.20px;transform-origin:right center;transform:scaleX(1.044);--c:10.2px;--d:0.200px;">2023/5/2</div>
<div class="tl" style="top:598.60px;line-height:16px;font-size:11.0px;left:100.00px;transform-origin:left center;--c:10.2px;--d:0.200px;"><span class="k">三星洗衣机</span></div>
<div class="tl" style="top:614.80px;line-height:16px;font-size:11.0px;left:100.00px;transform-origin:left center;transform:scaleX(0.936);--c:10.2px;--d:0.200px;">WT70M3200J</div>
<div class="tl" style="top:631.00px;line-height:16px;font-size:11.0px;left:100.00px;transform-origin:left center;transform:scaleX(0.836);--c:10.2px;--d:0.200px;">P</div>
<div class="tl" style="top:614.80px;line-height:16px;font-size:11.0px;left:168.00px;transform-origin:left center;--c:10.2px;--d:0.200px;"><span class="k">洗衣机</span></div>
<div class="tl" style="top:614.80px;line-height:16px;font-size:11.0px;left:236.00px;transform-origin:left center;--c:10.2px;--d:0.200px;"><span class="k">波轮洗衣机</span></div>
<div class="tl" style="top:614.80px;line-height:16px;font-size:11.0px;left:304.00px;transform-origin:left center;--c:10.2px;--d:0.200px;"><span class="k">程凯</span></div>
<div class="tl" style="top:614.80px;line-height:16px;font-size:11.0px;right:1003.20px;transform-origin:right center;transform:scaleX(0.935);--c:10.2px;--d:0.200px;">¥ 1,299.00</div>
<div class="tl" style="top:614.80px;line-height:16px;font-size:11.0px;right:935.20px;transform-origin:right center;transform:scaleX(0.935);--c:10.2px;--d:0.200px;">¥ 1,699.00</div>
<div class="tl" style="top:614.80px;line-height:16px;font-size:11.0px;right:867.20px;transform-origin:right center;transform:scaleX(1.022);--c:10.2px;--d:0.200px;">8</div>
<div class="tl" style="top:614.80px;line-height:16px;font-size:11.0px;right:799.20px;transform-origin:right center;transform:scaleX(0.944);--c:10.2px;--d:0.200px;">¥ 13,592.00</div>
<div class="tl" style="top:614.80px;line-height:16px;font-size:11.0px;right:730.20px;transform-origin:right center;transform:scaleX(0.944);--c:10.2px;--d:0.200px;">¥ 10,392.00</div>
<div class="tl" style="top:614.80px;line-height:16px;font-size:11.0px;right:662.20px;transform-origin:right center;transform:scaleX(0.935);--c:10.2px;--d:0.200px;">¥ 3,200.00</div>
<div class="tl" style="top:614.80px;line-height:16px;font-size:11.0px;left:782.00px;transform-origin:left center;--c:10.2px;--d:0.200px;"><span class="k">龙华店</span></div>
<div class="tl" style="top:615.80px;line-height:16px;font-size:11.0px;left:851.00px;transform-origin:left center;--c:11.3px;--d:0.300px;"><span class="k">西安</span></div>
<div class="a" style="left:779px;top:284px;width:71px;height:35px;border:2px solid #2e9e60"></div>
<div class="a" style="left:846.5px;top:315.8px;width:4.5px;height:4.5px;background:#1f9250;box-shadow:0 0 0 0.8px #bfe8cf"></div>
<div class="a" style="left:30px;top:643.6px;width:857px;height:12.4px;background:#fff;border-radius:0 0 6px 3px"></div>
<div class="a" style="left:875px;top:120px;width:12px;height:524px;background:#fff;border-radius:0 6px 0 0"></div>
<div class="a" style="left:879px;top:233px;width:4px;height:97px;background:#d6d6d6;border-radius:2px"></div>
<div class="a" style="left:42px;top:648px;width:645px;height:4px;background:#d6d6d6;border-radius:2px"></div>
<svg style="left:877px;top:124px" width="8" height="6"><path d="M1 4.5 L3.5 1.5 L6 4.5Z" fill="#8a8a8a"/></svg>
<svg style="left:877px;top:635px" width="8" height="6"><path d="M1 1.5 L3.5 4.5 L6 1.5Z" fill="#8a8a8a"/></svg>
<svg style="left:32.8px;top:646.5px" width="6" height="8"><path d="M4.5 1 L1.5 3.5 L4.5 6Z" fill="#8a8a8a"/></svg>
<svg style="left:867px;top:647px" width="6" height="8"><path d="M1.5 1 L4.5 3.5 L1.5 6Z" fill="#8a8a8a"/></svg></body></html>
